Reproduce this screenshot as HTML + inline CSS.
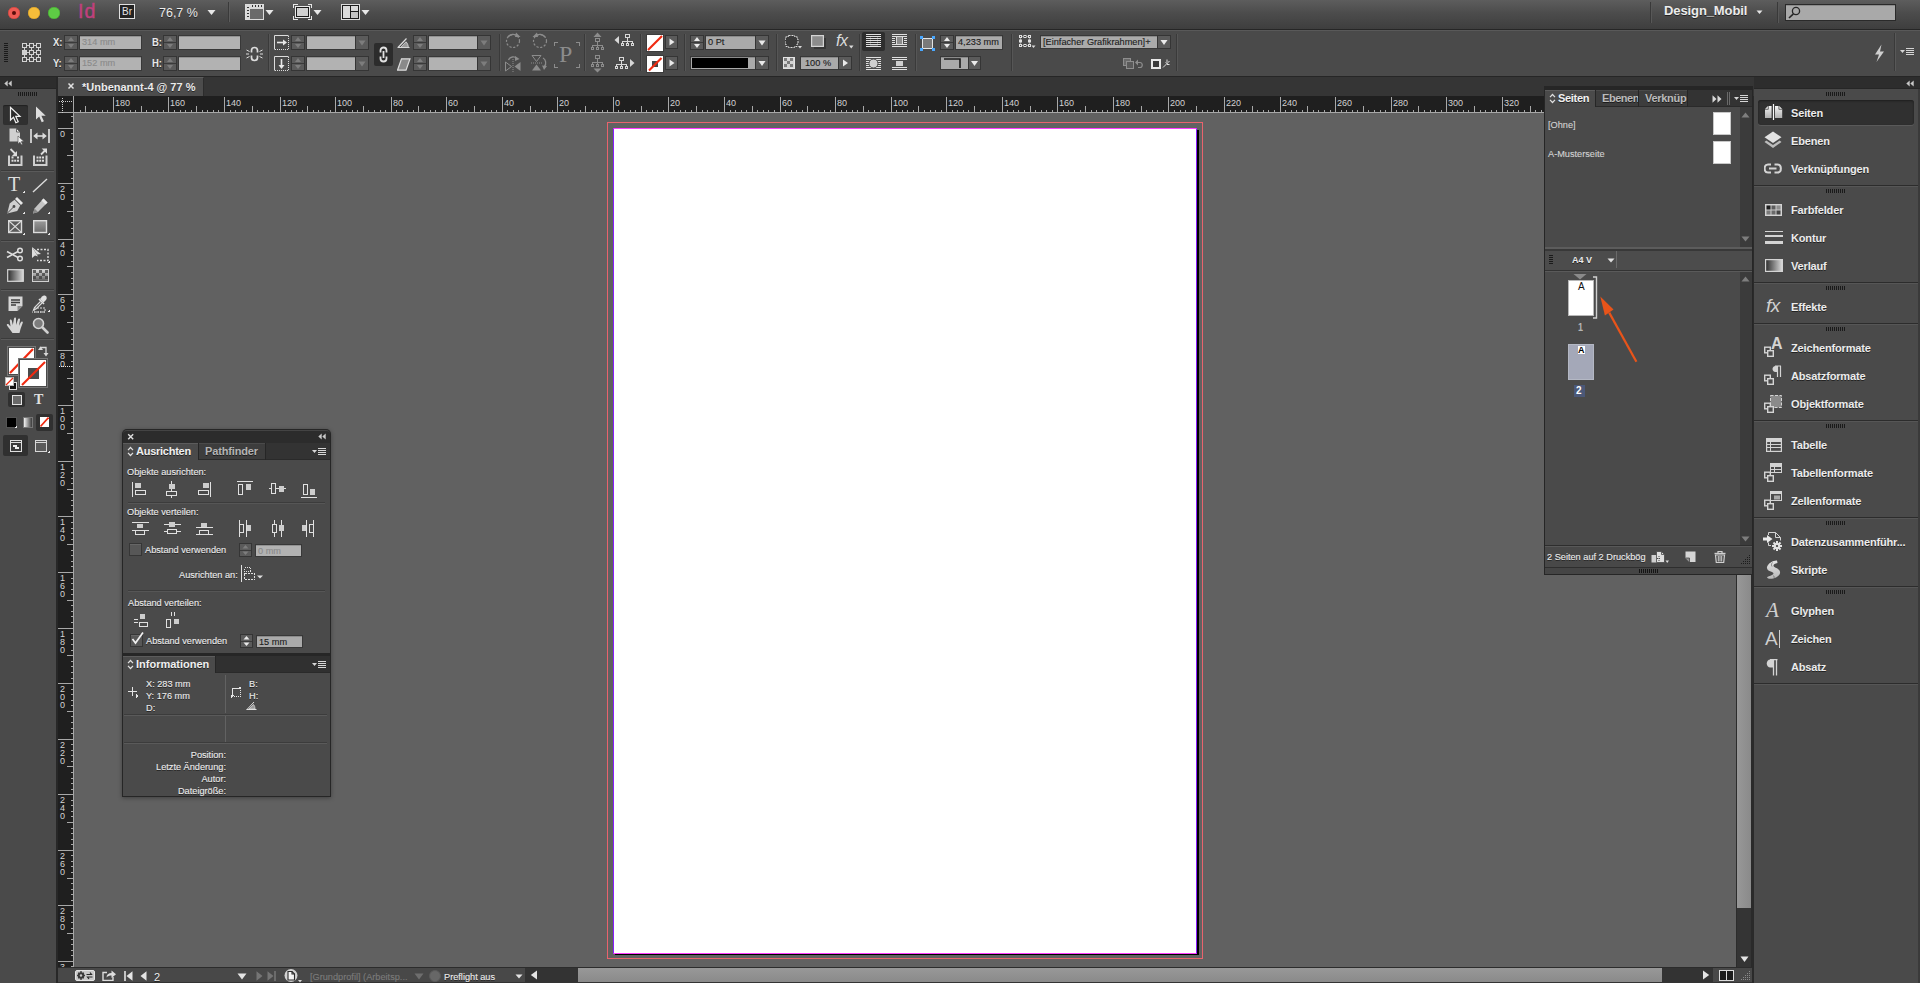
<!DOCTYPE html>
<html lang="de"><head><meta charset="utf-8"><title>InDesign</title><style>
html,body{margin:0;padding:0;}
body{width:1920px;height:983px;position:relative;overflow:hidden;background:#616161;font-family:"Liberation Sans",sans-serif;}
div,svg,span.t{position:absolute;display:block;box-sizing:border-box;}
span.t{white-space:nowrap;line-height:1;text-shadow:0 1px 0 rgba(0,0,0,.55);}
.sh0{text-shadow:none !important;}
</style></head><body>
<div style="left:607px;top:122px;width:596px;height:837px;border:1px solid #e8636d;"></div>
<div style="left:615px;top:130px;width:584px;height:825px;background:#000;"></div>
<div style="left:613px;top:128px;width:584px;height:826px;background:#fff;border-left:1px solid #8a1cff;border-right:1px solid #8a1cff;border-top:1px solid #ff3cff;border-bottom:1px solid #ff3cff;"></div>
<div style="left:58px;top:96px;width:1695px;height:17px;background:#1f1f1f;border-bottom:1px solid #a8a8a8;"></div>
<div style="left:58px;top:96px;width:16px;height:872px;background:#1f1f1f;border-right:1px solid #a8a8a8;"></div>
<div style="left:58px;top:112px;width:16px;height:1px;background:#a8a8a8;"></div>
<div style="left:73px;top:97px;width:1px;height:16px;background:#a8a8a8;"></div>
<svg style="left:0;top:0" width="80" height="115" viewBox="0 0 80 115" shape-rendering="crispEdges"><path d="M59 101h1M61 101h1M63 101h1M65 101h1M67 101h1M69 101h1M71 101h1M62 97v1M62 99v1M62 101v1M62 103v1M62 105v1M62 107v1M62 109v1M62 111v1" stroke="#cfcfcf" stroke-width="1" transform="translate(0,0.5)" fill="none"/></svg>
<svg style="left:0;top:0" width="1560" height="113" viewBox="0 0 1560 113" shape-rendering="crispEdges"><path d="M80 110v2M85 106v6M91 110v2M96 110v2M102 110v2M107 110v2M113 97v15M118 110v2M124 110v2M130 110v2M135 110v2M141 106v6M146 110v2M152 110v2M157 110v2M163 110v2M168 97v15M174 110v2M180 110v2M185 110v2M191 110v2M196 106v6M202 110v2M207 110v2M213 110v2M218 110v2M224 97v15M230 110v2M235 110v2M241 110v2M246 110v2M252 106v6M257 110v2M263 110v2M268 110v2M274 110v2M280 97v15M285 110v2M291 110v2M296 110v2M302 110v2M307 106v6M313 110v2M318 110v2M324 110v2M330 110v2M335 97v15M341 110v2M346 110v2M352 110v2M357 110v2M363 106v6M368 110v2M374 110v2M380 110v2M385 110v2M391 97v15M396 110v2M402 110v2M407 110v2M413 110v2M418 106v6M424 110v2M430 110v2M435 110v2M441 110v2M446 97v15M452 110v2M457 110v2M463 110v2M468 110v2M474 106v6M480 110v2M485 110v2M491 110v2M496 110v2M502 97v15M507 110v2M513 110v2M518 110v2M524 110v2M530 106v6M535 110v2M541 110v2M546 110v2M552 110v2M557 97v15M563 110v2M568 110v2M574 110v2M580 110v2M585 106v6M591 110v2M596 110v2M602 110v2M607 110v2M613 97v15M618 110v2M624 110v2M630 110v2M635 110v2M641 106v6M646 110v2M652 110v2M657 110v2M663 110v2M668 97v15M674 110v2M680 110v2M685 110v2M691 110v2M696 106v6M702 110v2M707 110v2M713 110v2M718 110v2M724 97v15M730 110v2M735 110v2M741 110v2M746 110v2M752 106v6M757 110v2M763 110v2M768 110v2M774 110v2M780 97v15M785 110v2M791 110v2M796 110v2M802 110v2M807 106v6M813 110v2M818 110v2M824 110v2M830 110v2M835 97v15M841 110v2M846 110v2M852 110v2M857 110v2M863 106v6M868 110v2M874 110v2M880 110v2M885 110v2M891 97v15M896 110v2M902 110v2M907 110v2M913 110v2M918 106v6M924 110v2M930 110v2M935 110v2M941 110v2M946 97v15M952 110v2M957 110v2M963 110v2M968 110v2M974 106v6M980 110v2M985 110v2M991 110v2M996 110v2M1002 97v15M1007 110v2M1013 110v2M1018 110v2M1024 110v2M1030 106v6M1035 110v2M1041 110v2M1046 110v2M1052 110v2M1057 97v15M1063 110v2M1068 110v2M1074 110v2M1080 110v2M1085 106v6M1091 110v2M1096 110v2M1102 110v2M1107 110v2M1113 97v15M1118 110v2M1124 110v2M1130 110v2M1135 110v2M1141 106v6M1146 110v2M1152 110v2M1157 110v2M1163 110v2M1168 97v15M1174 110v2M1180 110v2M1185 110v2M1191 110v2M1196 106v6M1202 110v2M1207 110v2M1213 110v2M1218 110v2M1224 97v15M1230 110v2M1235 110v2M1241 110v2M1246 110v2M1252 106v6M1257 110v2M1263 110v2M1268 110v2M1274 110v2M1280 97v15M1285 110v2M1291 110v2M1296 110v2M1302 110v2M1307 106v6M1313 110v2M1318 110v2M1324 110v2M1330 110v2M1335 97v15M1341 110v2M1346 110v2M1352 110v2M1357 110v2M1363 106v6M1368 110v2M1374 110v2M1380 110v2M1385 110v2M1391 97v15M1396 110v2M1402 110v2M1407 110v2M1413 110v2M1418 106v6M1424 110v2M1430 110v2M1435 110v2M1441 110v2M1446 97v15M1452 110v2M1457 110v2M1463 110v2M1468 110v2M1474 106v6M1480 110v2M1485 110v2M1491 110v2M1496 110v2M1502 97v15M1507 110v2M1513 110v2M1518 110v2M1524 110v2M1530 106v6M1535 110v2M1541 110v2" stroke="#a8a8a8" stroke-width="1" transform="translate(0.5,0)" fill="none"/></svg>
<span class="t" style="left:115px;top:98px;font-size:9px;color:#d2d2d2;font-size:9.5px;text-shadow:none;transform:scaleX(0.95);transform-origin:0 0;">180</span>
<span class="t" style="left:170px;top:98px;font-size:9px;color:#d2d2d2;font-size:9.5px;text-shadow:none;transform:scaleX(0.95);transform-origin:0 0;">160</span>
<span class="t" style="left:226px;top:98px;font-size:9px;color:#d2d2d2;font-size:9.5px;text-shadow:none;transform:scaleX(0.95);transform-origin:0 0;">140</span>
<span class="t" style="left:282px;top:98px;font-size:9px;color:#d2d2d2;font-size:9.5px;text-shadow:none;transform:scaleX(0.95);transform-origin:0 0;">120</span>
<span class="t" style="left:337px;top:98px;font-size:9px;color:#d2d2d2;font-size:9.5px;text-shadow:none;transform:scaleX(0.95);transform-origin:0 0;">100</span>
<span class="t" style="left:393px;top:98px;font-size:9px;color:#d2d2d2;font-size:9.5px;text-shadow:none;transform:scaleX(0.95);transform-origin:0 0;">80</span>
<span class="t" style="left:448px;top:98px;font-size:9px;color:#d2d2d2;font-size:9.5px;text-shadow:none;transform:scaleX(0.95);transform-origin:0 0;">60</span>
<span class="t" style="left:504px;top:98px;font-size:9px;color:#d2d2d2;font-size:9.5px;text-shadow:none;transform:scaleX(0.95);transform-origin:0 0;">40</span>
<span class="t" style="left:559px;top:98px;font-size:9px;color:#d2d2d2;font-size:9.5px;text-shadow:none;transform:scaleX(0.95);transform-origin:0 0;">20</span>
<span class="t" style="left:615px;top:98px;font-size:9px;color:#d2d2d2;font-size:9.5px;text-shadow:none;transform:scaleX(0.95);transform-origin:0 0;">0</span>
<span class="t" style="left:670px;top:98px;font-size:9px;color:#d2d2d2;font-size:9.5px;text-shadow:none;transform:scaleX(0.95);transform-origin:0 0;">20</span>
<span class="t" style="left:726px;top:98px;font-size:9px;color:#d2d2d2;font-size:9.5px;text-shadow:none;transform:scaleX(0.95);transform-origin:0 0;">40</span>
<span class="t" style="left:782px;top:98px;font-size:9px;color:#d2d2d2;font-size:9.5px;text-shadow:none;transform:scaleX(0.95);transform-origin:0 0;">60</span>
<span class="t" style="left:837px;top:98px;font-size:9px;color:#d2d2d2;font-size:9.5px;text-shadow:none;transform:scaleX(0.95);transform-origin:0 0;">80</span>
<span class="t" style="left:893px;top:98px;font-size:9px;color:#d2d2d2;font-size:9.5px;text-shadow:none;transform:scaleX(0.95);transform-origin:0 0;">100</span>
<span class="t" style="left:948px;top:98px;font-size:9px;color:#d2d2d2;font-size:9.5px;text-shadow:none;transform:scaleX(0.95);transform-origin:0 0;">120</span>
<span class="t" style="left:1004px;top:98px;font-size:9px;color:#d2d2d2;font-size:9.5px;text-shadow:none;transform:scaleX(0.95);transform-origin:0 0;">140</span>
<span class="t" style="left:1059px;top:98px;font-size:9px;color:#d2d2d2;font-size:9.5px;text-shadow:none;transform:scaleX(0.95);transform-origin:0 0;">160</span>
<span class="t" style="left:1115px;top:98px;font-size:9px;color:#d2d2d2;font-size:9.5px;text-shadow:none;transform:scaleX(0.95);transform-origin:0 0;">180</span>
<span class="t" style="left:1170px;top:98px;font-size:9px;color:#d2d2d2;font-size:9.5px;text-shadow:none;transform:scaleX(0.95);transform-origin:0 0;">200</span>
<span class="t" style="left:1226px;top:98px;font-size:9px;color:#d2d2d2;font-size:9.5px;text-shadow:none;transform:scaleX(0.95);transform-origin:0 0;">220</span>
<span class="t" style="left:1282px;top:98px;font-size:9px;color:#d2d2d2;font-size:9.5px;text-shadow:none;transform:scaleX(0.95);transform-origin:0 0;">240</span>
<span class="t" style="left:1337px;top:98px;font-size:9px;color:#d2d2d2;font-size:9.5px;text-shadow:none;transform:scaleX(0.95);transform-origin:0 0;">260</span>
<span class="t" style="left:1393px;top:98px;font-size:9px;color:#d2d2d2;font-size:9.5px;text-shadow:none;transform:scaleX(0.95);transform-origin:0 0;">280</span>
<span class="t" style="left:1448px;top:98px;font-size:9px;color:#d2d2d2;font-size:9.5px;text-shadow:none;transform:scaleX(0.95);transform-origin:0 0;">300</span>
<span class="t" style="left:1504px;top:98px;font-size:9px;color:#d2d2d2;font-size:9.5px;text-shadow:none;transform:scaleX(0.95);transform-origin:0 0;">320</span>
<svg style="left:0;top:0" width="75" height="967" viewBox="0 0 75 967" shape-rendering="crispEdges"><path d="M71 116h2M71 122h2M58 128h15M71 133h2M71 139h2M71 144h2M71 150h2M67 155h6M71 161h2M71 166h2M71 172h2M71 178h2M58 183h15M71 189h2M71 194h2M71 200h2M71 205h2M67 211h6M71 216h2M71 222h2M71 228h2M71 233h2M58 239h15M71 244h2M71 250h2M71 255h2M71 261h2M67 266h6M71 272h2M71 278h2M71 283h2M71 289h2M58 294h15M71 300h2M71 305h2M71 311h2M71 316h2M67 322h6M71 328h2M71 333h2M71 339h2M71 344h2M58 350h15M71 355h2M71 361h2M71 366h2M71 372h2M67 378h6M71 383h2M71 389h2M71 394h2M71 400h2M58 405h15M71 411h2M71 416h2M71 422h2M71 428h2M67 433h6M71 439h2M71 444h2M71 450h2M71 455h2M58 461h15M71 466h2M71 472h2M71 478h2M71 483h2M67 489h6M71 494h2M71 500h2M71 505h2M71 511h2M58 516h15M71 522h2M71 528h2M71 533h2M71 539h2M67 544h6M71 550h2M71 555h2M71 561h2M71 566h2M58 572h15M71 578h2M71 583h2M71 589h2M71 594h2M67 600h6M71 605h2M71 611h2M71 616h2M71 622h2M58 628h15M71 633h2M71 639h2M71 644h2M71 650h2M67 655h6M71 661h2M71 666h2M71 672h2M71 678h2M58 683h15M71 689h2M71 694h2M71 700h2M71 705h2M67 711h6M71 716h2M71 722h2M71 728h2M71 733h2M58 739h15M71 744h2M71 750h2M71 755h2M71 761h2M67 766h6M71 772h2M71 778h2M71 783h2M71 789h2M58 794h15M71 800h2M71 805h2M71 811h2M71 816h2M67 822h6M71 828h2M71 833h2M71 839h2M71 844h2M58 850h15M71 855h2M71 861h2M71 866h2M71 872h2M67 878h6M71 883h2M71 889h2M71 894h2M71 900h2M58 905h15M71 911h2M71 916h2M71 922h2M71 928h2M67 933h6M71 939h2M71 944h2M71 950h2M71 955h2M58 961h15M71 966h2M71 972h2M71 978h2M71 983h2M67 989h6" stroke="#a8a8a8" stroke-width="1" transform="translate(0,0.5)" fill="none"/></svg>
<div style="left:58px;top:113px;width:15px;height:855px;overflow:hidden;">
<span class="t" style="left:2px;top:17px;font-size:9px;color:#d4d4d4;text-shadow:none;">0</span>
<span class="t" style="left:2px;top:72px;font-size:9px;color:#d4d4d4;text-shadow:none;">2</span>
<span class="t" style="left:2px;top:80px;font-size:9px;color:#d4d4d4;text-shadow:none;">0</span>
<span class="t" style="left:2px;top:128px;font-size:9px;color:#d4d4d4;text-shadow:none;">4</span>
<span class="t" style="left:2px;top:136px;font-size:9px;color:#d4d4d4;text-shadow:none;">0</span>
<span class="t" style="left:2px;top:183px;font-size:9px;color:#d4d4d4;text-shadow:none;">6</span>
<span class="t" style="left:2px;top:191px;font-size:9px;color:#d4d4d4;text-shadow:none;">0</span>
<span class="t" style="left:2px;top:239px;font-size:9px;color:#d4d4d4;text-shadow:none;">8</span>
<span class="t" style="left:2px;top:247px;font-size:9px;color:#d4d4d4;text-shadow:none;">0</span>
<span class="t" style="left:2px;top:294px;font-size:9px;color:#d4d4d4;text-shadow:none;">1</span>
<span class="t" style="left:2px;top:302px;font-size:9px;color:#d4d4d4;text-shadow:none;">0</span>
<span class="t" style="left:2px;top:310px;font-size:9px;color:#d4d4d4;text-shadow:none;">0</span>
<span class="t" style="left:2px;top:350px;font-size:9px;color:#d4d4d4;text-shadow:none;">1</span>
<span class="t" style="left:2px;top:358px;font-size:9px;color:#d4d4d4;text-shadow:none;">2</span>
<span class="t" style="left:2px;top:366px;font-size:9px;color:#d4d4d4;text-shadow:none;">0</span>
<span class="t" style="left:2px;top:405px;font-size:9px;color:#d4d4d4;text-shadow:none;">1</span>
<span class="t" style="left:2px;top:413px;font-size:9px;color:#d4d4d4;text-shadow:none;">4</span>
<span class="t" style="left:2px;top:421px;font-size:9px;color:#d4d4d4;text-shadow:none;">0</span>
<span class="t" style="left:2px;top:461px;font-size:9px;color:#d4d4d4;text-shadow:none;">1</span>
<span class="t" style="left:2px;top:469px;font-size:9px;color:#d4d4d4;text-shadow:none;">6</span>
<span class="t" style="left:2px;top:477px;font-size:9px;color:#d4d4d4;text-shadow:none;">0</span>
<span class="t" style="left:2px;top:517px;font-size:9px;color:#d4d4d4;text-shadow:none;">1</span>
<span class="t" style="left:2px;top:525px;font-size:9px;color:#d4d4d4;text-shadow:none;">8</span>
<span class="t" style="left:2px;top:533px;font-size:9px;color:#d4d4d4;text-shadow:none;">0</span>
<span class="t" style="left:2px;top:572px;font-size:9px;color:#d4d4d4;text-shadow:none;">2</span>
<span class="t" style="left:2px;top:580px;font-size:9px;color:#d4d4d4;text-shadow:none;">0</span>
<span class="t" style="left:2px;top:588px;font-size:9px;color:#d4d4d4;text-shadow:none;">0</span>
<span class="t" style="left:2px;top:628px;font-size:9px;color:#d4d4d4;text-shadow:none;">2</span>
<span class="t" style="left:2px;top:636px;font-size:9px;color:#d4d4d4;text-shadow:none;">2</span>
<span class="t" style="left:2px;top:644px;font-size:9px;color:#d4d4d4;text-shadow:none;">0</span>
<span class="t" style="left:2px;top:683px;font-size:9px;color:#d4d4d4;text-shadow:none;">2</span>
<span class="t" style="left:2px;top:691px;font-size:9px;color:#d4d4d4;text-shadow:none;">4</span>
<span class="t" style="left:2px;top:699px;font-size:9px;color:#d4d4d4;text-shadow:none;">0</span>
<span class="t" style="left:2px;top:739px;font-size:9px;color:#d4d4d4;text-shadow:none;">2</span>
<span class="t" style="left:2px;top:747px;font-size:9px;color:#d4d4d4;text-shadow:none;">6</span>
<span class="t" style="left:2px;top:755px;font-size:9px;color:#d4d4d4;text-shadow:none;">0</span>
<span class="t" style="left:2px;top:794px;font-size:9px;color:#d4d4d4;text-shadow:none;">2</span>
<span class="t" style="left:2px;top:802px;font-size:9px;color:#d4d4d4;text-shadow:none;">8</span>
<span class="t" style="left:2px;top:810px;font-size:9px;color:#d4d4d4;text-shadow:none;">0</span>
<span class="t" style="left:2px;top:850px;font-size:9px;color:#d4d4d4;text-shadow:none;">3</span>
<span class="t" style="left:2px;top:858px;font-size:9px;color:#d4d4d4;text-shadow:none;">0</span>
<span class="t" style="left:2px;top:866px;font-size:9px;color:#d4d4d4;text-shadow:none;">0</span>
</div>
<svg style="left:0;top:0" width="75" height="400" viewBox="0 0 75 400" shape-rendering="crispEdges"><path d="M59 366h1M61 366h1M63 366h1M65 366h1M67 366h1M69 366h1M71 366h1" stroke="#e8e8e8" stroke-width="1" transform="translate(0,0.5)" fill="none"/></svg>
<div style="left:1736px;top:113px;width:17px;height:855px;background:#343434;"></div>
<div style="left:1736px;top:113px;width:1px;height:855px;background:#2c2c2c;"></div>
<div style="left:1737px;top:113px;width:14px;height:795px;background:linear-gradient(90deg,#989898,#8a8a8a);"></div>
<svg style="left:1740px;top:956px" width="10" height="7" viewBox="0 0 10 7" ><path d="M0.5 0.5h8L4.5 6z" fill="#e4e4e4"/></svg>
<div style="left:1751px;top:77px;width:3px;height:906px;background:#2a2a2a;"></div>
<div style="left:58px;top:967px;width:1694px;height:1px;background:#2c2c2c;"></div>
<div style="left:58px;top:968px;width:1694px;height:15px;background:#484848;"></div>
<div style="left:58px;top:982px;width:1694px;height:1px;background:#333;"></div>
<div style="left:525px;top:968px;width:1188px;height:14px;background:#333;"></div>
<div style="left:578px;top:968px;width:1084px;height:14px;background:linear-gradient(#989898,#8a8a8a);"></div>
<svg style="left:530px;top:970px" width="8" height="11" viewBox="0 0 8 11" ><path d="M7 0.5v9L0.8 5z" fill="#e4e4e4"/></svg>
<svg style="left:1702px;top:970px" width="8" height="11" viewBox="0 0 8 11" ><path d="M1 0.5v9L7.2 5z" fill="#e4e4e4"/></svg>
<div style="left:1713px;top:968px;width:39px;height:14px;background:#484848;"></div>
<svg style="left:1719px;top:970px" width="15" height="11" viewBox="0 0 15 11" shape-rendering="crispEdges"><rect x="0.5" y="0.5" width="14" height="10" fill="#1c1c1c" stroke="#dcdcdc"/><path d="M7.5 0v11" stroke="#dcdcdc"/></svg>
<svg style="left:1741px;top:971px" width="10" height="10" viewBox="0 0 10 10" shape-rendering="crispEdges"><path d="M0 8h1M2 6h1M2 8h1M4 4h1M4 6h1M4 8h1M6 2h1M6 4h1M6 6h1M6 8h1M8 0h1M8 2h1M8 4h1M8 6h1M8 8h1" stroke="#8a8a8a" stroke-width="1" transform="translate(0,0.5)"/></svg>
<div style="left:0px;top:0px;width:1920px;height:29px;background:linear-gradient(#5d5d5d,#4c4c4c 45%,#3e3e3e);"></div>
<div style="left:0px;top:29px;width:1920px;height:1px;background:#262626;"></div>
<div style="left:0px;top:30px;width:1920px;height:46px;background:#4a4a4a;border-top:1px solid #595959;"></div>
<div style="left:0px;top:76px;width:1920px;height:1px;background:#262626;"></div>
<div style="left:0px;top:77px;width:1920px;height:19px;background:#353535;"></div>
<div style="left:58px;top:77px;width:146px;height:19px;background:#4c4c4c;border-top:1px solid #5e5e5e;border-right:1px solid #2c2c2c;"></div>
<svg style="left:67px;top:82px" width="9" height="9" viewBox="0 0 9 9" ><path d="M1.5 1.5l5 5M6.5 1.5l-5 5" stroke="#e2e2e2" stroke-width="1.5" fill="none"/></svg>
<span class="t" style="left:82px;top:82px;font-size:11px;color:#ececec;font-weight:bold;letter-spacing:0px;">*Unbenannt-4 @ 77 %</span>
<div style="left:8px;top:7px;width:12px;height:12px;border-radius:6px;background:#ee5b54;box-shadow:inset 0 0 0 0.5px #c9413b;"></div>
<div style="left:28px;top:7px;width:12px;height:12px;border-radius:6px;background:#f6bd3a;box-shadow:inset 0 0 0 0.5px #d49c24;"></div>
<div style="left:48px;top:7px;width:12px;height:12px;border-radius:6px;background:#5ecb45;box-shadow:inset 0 0 0 0.5px #43a82f;"></div>
<div style="left:12px;top:11px;width:4px;height:4px;border-radius:2px;background:#5a0d0b;"></div>
<span class="t" style="left:78px;top:1px;font-size:20px;color:#c0407e;transform:scaleX(0.98);transform-origin:0 50%;text-shadow:none;letter-spacing:1px;-webkit-text-stroke:0.45px #c0407e;">Id</span>
<div style="left:119px;top:4px;width:16px;height:15px;background:#222;border:1px solid #e0e0e0;"></div>
<span class="t" style="left:122px;top:6px;font-size:10.5px;color:#e4e4e4;transform:scaleX(0.95);transform-origin:0 50%;text-shadow:none;">Br</span>
<span class="t" style="left:159px;top:6px;font-size:13px;color:#ececec;transform:scaleX(0.96);transform-origin:0 50%;">76,7 %</span>
<svg style="left:207px;top:9px" width="9" height="7" viewBox="0 0 9 7" ><path d="M0.5 1h8L4.5 6z" fill="#e8e8e8"/></svg>
<div style="left:228px;top:2px;width:1px;height:20px;background:#3a3a3a;border-right:0;"></div>
<div style="left:229px;top:2px;width:1px;height:20px;background:#5c5c5c;"></div>
<svg style="left:245px;top:4px" width="19" height="16" viewBox="0 0 19 16" shape-rendering="crispEdges"><rect x="0.5" y="0.5" width="18" height="15" fill="#d9d9d9" stroke="#dcdcdc"/><rect x="5" y="5" width="13" height="10" fill="#6a6a6a"/><path d="M2 3h2M2 6h2M2 9h2M2 12h2M7 1v2M10 1v2M13 1v2M16 1v2" stroke="#333"/></svg>
<svg style="left:265px;top:9px" width="9" height="7" viewBox="0 0 9 7" ><path d="M0.5 1h8L4.5 6z" fill="#e8e8e8"/></svg>
<svg style="left:293px;top:4px" width="19" height="16" viewBox="0 0 19 16" shape-rendering="crispEdges"><path d="M0.5 4V0.5h4M14.5 0.5h4V4M18.5 12v3.5h-4M4.500 15.500h-4V12" stroke="#e8e8e8" fill="none"/><rect x="3.5" y="3.5" width="12" height="9" fill="#d0d0d0" stroke="#1a1a1a"/><rect x="2.500" y="2.500" width="14" height="11" fill="none" stroke="#e8e8e8"/></svg>
<svg style="left:313px;top:9px" width="9" height="7" viewBox="0 0 9 7" ><path d="M0.5 1h8L4.5 6z" fill="#e8e8e8"/></svg>
<svg style="left:341px;top:4px" width="19" height="16" viewBox="0 0 19 16" shape-rendering="crispEdges"><rect x="0.5" y="0.5" width="18" height="15" fill="#1c1c1c" stroke="#dcdcdc"/><rect x="2" y="2" width="7" height="12" fill="#dadada"/><rect x="10" y="2" width="7" height="5" fill="#dadada"/><rect x="10" y="8" width="7" height="6" fill="#c4c4c4"/></svg>
<svg style="left:361px;top:9px" width="9" height="7" viewBox="0 0 9 7" ><path d="M0.5 1h8L4.5 6z" fill="#e8e8e8"/></svg>
<div style="left:1650px;top:2px;width:1px;height:21px;background:#393939;"></div>
<div style="left:1651px;top:2px;width:1px;height:21px;background:#585858;"></div>
<span class="t" style="left:1664px;top:4px;font-size:13px;color:#ececec;font-weight:bold;letter-spacing:-0.1px;">Design_Mobil</span>
<svg style="left:1756px;top:10px" width="8" height="5" viewBox="0 0 8 5" ><path d="M0.5 0.500h6L3.500 4z" fill="#e4e4e4"/></svg>
<div style="left:1777px;top:2px;width:1px;height:21px;background:#393939;"></div>
<div style="left:1778px;top:2px;width:1px;height:21px;background:#585858;"></div>
<div style="left:1785px;top:4px;width:111px;height:17px;background:#a9a9a9;border:1px solid #2a2a2a;box-shadow:inset 0 1px 0 #8c8c8c;"></div>
<svg style="left:1788px;top:6px" width="13" height="13" viewBox="0 0 13 13" ><circle cx="8" cy="5" r="3.600" fill="none" stroke="#262626" stroke-width="1.300"/><path d="M5.400 7.800L1 12" stroke="#262626" stroke-width="1.600"/></svg>
<svg style="left:1873px;top:44px" width="13" height="19" viewBox="0 0 13 19" ><path d="M8.500 0.500L2 10.500h4L3.500 18L11 7.500H7z" fill="#cfcfcf"/></svg>
<div style="left:1894px;top:33px;width:1px;height:38px;background:#3a3a3a;"></div>
<div style="left:1895px;top:33px;width:1px;height:38px;background:#585858;"></div>
<svg style="left:1900px;top:48px" width="15" height="8" viewBox="0 0 15 8" shape-rendering="crispEdges"><path d="M0 2h5L2.500 5z" fill="#d6d6d6" shape-rendering="auto"/><path d="M6 1h8M6 3h8M6 5h8M6 7h8" stroke="#d6d6d6" stroke-width="1" transform="translate(0,-0.5)"/></svg>
<div style="left:75px;top:970px;width:20px;height:11px;background:#c9c9c9;border-radius:2px;border:1px solid #e4e4e4;"></div>
<svg style="left:76px;top:970px" width="18" height="11" viewBox="0 0 18 11" ><circle cx="5" cy="5.500" r="3.200" fill="#3a3a3a"/><circle cx="5" cy="5.500" r="1.200" fill="#c9c9c9"/><path d="M5 1v9M1 5.500h8M2.200 2.700l5.600 5.600M7.800 2.700l-5.600 5.600" stroke="#3a3a3a" stroke-width="1.300"/><circle cx="5" cy="5.500" r="1.200" fill="#c9c9c9"/><path d="M10.500 4.500h5l-1.500-2M16.500 7h-5l1.500 2" stroke="#2a2a2a" stroke-width="1.200" fill="none"/></svg>
<svg style="left:102px;top:969px" width="15" height="12" viewBox="0 0 15 12" ><path d="M5 3.500H1v8h10V8" fill="none" stroke="#dcdcdc" stroke-width="1.400"/><path d="M4.500 8.500c0-3 2-4.500 5-4.500V1.500l4.500 3.800-4.500 3.800V6.500c-2 0-3.500 0.500-5 2z" fill="#dcdcdc"/></svg>
<svg style="left:124px;top:971px" width="9" height="10" viewBox="0 0 9 10" ><path d="M1 0v10" stroke="#e4e4e4" stroke-width="1.600"/><path d="M8.500 0.300v9.400L2.500 5z" fill="#e4e4e4"/></svg>
<svg style="left:140px;top:971px" width="7" height="10" viewBox="0 0 7 10" ><path d="M6.500 0.300v9.400L0.500 5z" fill="#e4e4e4"/></svg>
<span class="t" style="left:154px;top:972px;font-size:11px;color:#ececec;">2</span>
<svg style="left:237px;top:973px" width="10" height="7" viewBox="0 0 10 7" ><path d="M0.500 0.500h9L5 6.500z" fill="#e4e4e4"/></svg>
<svg style="left:256px;top:971px" width="7" height="10" viewBox="0 0 7 10" ><path d="M0.500 0.300v9.400L6.500 5z" fill="#757575"/></svg>
<svg style="left:267px;top:971px" width="9" height="10" viewBox="0 0 9 10" ><path d="M0.500 0.300v9.400L6.500 5z" fill="#757575"/><path d="M8 0v10" stroke="#757575" stroke-width="1.600"/></svg>
<svg style="left:284px;top:968px" width="18" height="15" viewBox="0 0 18 15" ><circle cx="7" cy="7.500" r="6.500" fill="#d2d2d2"/><path d="M4 3.500h4l2.500 2.500v6H4z" fill="#f4f4f4" stroke="#2b2b2b" stroke-width="1.100"/><path d="M8 3.500v2.500h2.500" fill="none" stroke="#2b2b2b" stroke-width="1.100"/><path d="M14 12h4l-2 2.500z" fill="#d6d6d6"/></svg>
<span class="t" style="left:310px;top:973px;font-size:9.2px;color:#7b7b7b;-webkit-text-stroke:0.12px;text-shadow:none;">[Grundprofil] (Arbeitsp...</span>
<svg style="left:414px;top:973px" width="10" height="7" viewBox="0 0 10 7" ><path d="M0.500 0.500h9L5 6.500z" fill="#6e6e6e"/></svg>
<div style="left:429px;top:970px;width:12px;height:12px;border-radius:6px;background:#676767;border:1px solid #5a5a5a;"></div>
<span class="t" style="left:444px;top:973px;font-size:9.2px;color:#ececec;-webkit-text-stroke:0.12px;">Preflight aus</span>
<svg style="left:515px;top:974px" width="8" height="5" viewBox="0 0 8 5" ><path d="M0.500 0.500h7L4 4.500z" fill="#e4e4e4"/></svg>
<div style="left:0px;top:77px;width:56px;height:906px;background:#4a4a4a;"></div>
<div style="left:0px;top:77px;width:56px;height:12px;background:#2d2d2d;border-bottom:1px solid #262626;"></div>
<div style="left:56px;top:77px;width:2px;height:906px;background:#282828;"></div>
<svg style="left:4px;top:80px" width="9" height="7" viewBox="0 0 9 7" ><path d="M3.700 0.500v6L0.300 3.500zM7.700 0.500v6L4.300 3.500z" fill="#c8c8c8"/></svg>
<svg style="left:18px;top:92px" width="20" height="4" viewBox="0 0 20 4" shape-rendering="crispEdges"><path d="M0 0v4M2 0v4M4 0v4M6 0v4M8 0v4M10 0v4M12 0v4M14 0v4M16 0v4M18 0v4" stroke="#1a1a1a" stroke-width="1" transform="translate(0.5,0)"/></svg>
<div style="left:3px;top:105px;width:25px;height:20px;background:#303030;border-radius:2px;box-shadow:inset 0 1px 1px #222;"></div>
<svg style="left:9px;top:106px" width="14" height="19" viewBox="0 0 14 19" ><path d="M1.500 1.500v12.500l3-2.800 2.400 5.600 2.300-1-2.400-5.400h4.200z" fill="#2b2b2b" stroke="#f0f0f0" stroke-width="1.200" stroke-linejoin="miter"/></svg>
<svg style="left:35px;top:106px" width="12" height="18" viewBox="0 0 12 18" ><path d="M1 0.500v13l3.200-3 2.500 5.800 2.200-1-2.500-5.600h4.300z" fill="#dedede"/></svg>
<svg style="left:9px;top:128px" width="15" height="17" viewBox="0 0 15 17" ><path d="M0.500 0.500h7l3.500 3.500v9.500h-10.500z" fill="#d0d0d0"/><path d="M7.500 0.500v3.500h3.500z" fill="#f4f4f4" stroke="#4a4a4a" stroke-width="0.800"/><path d="M9 8v8l2-1.800 1.200 2.600 1.300-0.600-1.200-2.600h2.700z" fill="#f0f0f0" stroke="#4a4a4a" stroke-width="0.600"/></svg>
<svg style="left:30px;top:129px" width="20" height="14" viewBox="0 0 20 14" ><path d="M1 0v14M19 0v14" stroke="#d4d4d4" stroke-width="1.800"/><path d="M5 7h10" stroke="#dcdcdc" stroke-width="1.600"/><path d="M3.200 7l4.300-3.500v7zM16.800 7l-4.300-3.500v7z" fill="#dcdcdc"/></svg>
<svg style="left:8px;top:148px" width="15" height="18" viewBox="0 0 15 18" ><g transform="translate(0,7.500)"><path d="M1 0v9.500h12.500v-9.500" fill="none" stroke="#d0d0d0" stroke-width="2"/><rect x="3.5" y="1" width="2" height="2" fill="#dcdcdc"/><rect x="9" y="1" width="2" height="2" fill="#dcdcdc"/><rect x="3.5" y="4.2" width="2" height="2" fill="#dcdcdc"/><rect x="6.2" y="4.2" width="2" height="2" fill="#dcdcdc"/><rect x="9" y="4.2" width="2" height="2" fill="#dcdcdc"/></g><path d="M2.500 1l4.500 4.500" stroke="#dcdcdc" stroke-width="1.800"/><path d="M9 3v5.300h-5.300z" fill="#dcdcdc"/></svg>
<svg style="left:33px;top:148px" width="16" height="18" viewBox="0 0 16 18" ><g transform="translate(0,7.500)"><path d="M1 0v9.500h12.500v-9.500" fill="none" stroke="#d0d0d0" stroke-width="2"/><rect x="3.5" y="1" width="2" height="2" fill="#dcdcdc"/><rect x="6.2" y="1" width="2" height="2" fill="#dcdcdc"/><rect x="9" y="1" width="2" height="2" fill="#dcdcdc"/><rect x="3.5" y="4.2" width="2" height="2" fill="#dcdcdc"/><rect x="6.2" y="4.2" width="2" height="2" fill="#dcdcdc"/><rect x="9" y="4.2" width="2" height="2" fill="#dcdcdc"/></g><path d="M8 6.500l4.500-4.500" stroke="#dcdcdc" stroke-width="1.800"/><path d="M8.700 0.500h5.300v5.300z" fill="#dcdcdc"/></svg>
<div style="left:1px;top:170px;width:53px;height:1px;background:#3b3b3b;"></div>
<div style="left:1px;top:171px;width:53px;height:1px;background:#5a5a5a;"></div>
<span class="t" style="left:8px;top:174px;font-size:20px;color:#dedede;font-family:'Liberation Serif',serif;text-shadow:none;">T</span>
<svg style="left:22px;top:190px" width="3" height="3" viewBox="0 0 3 3" shape-rendering="crispEdges"><path d="M3 0v3H0z" fill="#e6e6e6"/></svg>
<svg style="left:32px;top:178px" width="16" height="15" viewBox="0 0 16 15" ><path d="M1 14L15 1" stroke="#dcdcdc" stroke-width="1.400"/></svg>
<svg style="left:6px;top:196px" width="18" height="18" viewBox="0 0 18 18" ><path d="M11 1l6 6-2 2-6-6z" fill="#e6e6e6"/><path d="M8.500 3.800l5.700 5.700-3 5.500-10 2.500 2.500-10z" fill="#cfcfcf"/><path d="M1.500 17l6-6" stroke="#4a4a4a" stroke-width="1"/><circle cx="8" cy="10.500" r="1.400" fill="#4a4a4a"/></svg>
<svg style="left:22px;top:211px" width="3" height="3" viewBox="0 0 3 3" shape-rendering="crispEdges"><path d="M3 0v3H0z" fill="#e6e6e6"/></svg>
<svg style="left:32px;top:197px" width="17" height="17" viewBox="0 0 17 17" ><path d="M11.500 1.500l4 4-9.500 9.500-5 1.500 1.500-5z" fill="#c4c4c4"/><path d="M11.500 1.500l4 4-2 2-4-4z" fill="#e8e8e8"/><path d="M1 16.500l1.500-5 3.500 3.500z" fill="#8a8a8a"/></svg>
<svg style="left:47px;top:211px" width="3" height="3" viewBox="0 0 3 3" shape-rendering="crispEdges"><path d="M3 0v3H0z" fill="#e6e6e6"/></svg>
<svg style="left:8px;top:220px" width="15" height="14" viewBox="0 0 15 14" ><rect x="0.700" y="0.700" width="12.800" height="11.800" fill="#5a5a5a" stroke="#dcdcdc" stroke-width="1.400"/><path d="M1 1l12.200 11.200M13.200 1L1 12.200" stroke="#dcdcdc" stroke-width="1.100"/></svg>
<svg style="left:22px;top:232px" width="3" height="3" viewBox="0 0 3 3" shape-rendering="crispEdges"><path d="M3 0v3H0z" fill="#e6e6e6"/></svg>
<svg style="left:33px;top:220px" width="15" height="14" viewBox="0 0 15 14" ><defs><linearGradient id="rg1" x1="0" y1="0" x2="0" y2="1"><stop offset="0" stop-color="#9a9a9a"/><stop offset="1" stop-color="#6a6a6a"/></linearGradient></defs><rect x="0.700" y="0.700" width="12.800" height="11.800" fill="url(#rg1)" stroke="#dcdcdc" stroke-width="1.400"/></svg>
<svg style="left:47px;top:232px" width="3" height="3" viewBox="0 0 3 3" shape-rendering="crispEdges"><path d="M3 0v3H0z" fill="#e6e6e6"/></svg>
<div style="left:1px;top:240px;width:53px;height:1px;background:#3b3b3b;"></div>
<div style="left:1px;top:241px;width:53px;height:1px;background:#5a5a5a;"></div>
<svg style="left:6px;top:247px" width="18" height="16" viewBox="0 0 18 16" ><circle cx="14" cy="3.500" r="2.300" fill="none" stroke="#dcdcdc" stroke-width="1.500"/><circle cx="14" cy="11.500" r="2.300" fill="none" stroke="#dcdcdc" stroke-width="1.500"/><path d="M12 4.500L1 10.500M12 10.500L1 4.500" stroke="#dcdcdc" stroke-width="1.600"/></svg>
<svg style="left:31px;top:246px" width="19" height="18" viewBox="0 0 19 18" ><path d="M6 3.500h11v11h-11" fill="none" stroke="#dcdcdc" stroke-width="1.400" stroke-dasharray="2 1.500"/><path d="M1 1v11l3-2.500 3 1z" fill="#dcdcdc"/><path d="M1 1l9 7-4 0.500z" fill="#dcdcdc"/></svg>
<svg style="left:47px;top:260px" width="3" height="3" viewBox="0 0 3 3" shape-rendering="crispEdges"><path d="M3 0v3H0z" fill="#e6e6e6"/></svg>
<svg style="left:7px;top:269px" width="17" height="13" viewBox="0 0 17 13" ><defs><linearGradient id="rg2" x1="0" y1="0" x2="1" y2="0"><stop offset="0" stop-color="#2c2c2c"/><stop offset="1" stop-color="#d8d8d8"/></linearGradient></defs><rect x="0.700" y="0.700" width="15.600" height="11.600" fill="url(#rg2)" stroke="#d8d8d8" stroke-width="1.200"/></svg>
<svg style="left:32px;top:269px" width="17" height="13" viewBox="0 0 17 13" shape-rendering="crispEdges"><defs><linearGradient id="rg3" x1="0" y1="0" x2="0" y2="1"><stop offset="0" stop-color="#e0e0e0"/><stop offset="1" stop-color="#555"/></linearGradient></defs><rect x="0.500" y="0.500" width="16" height="12" fill="url(#rg3)" stroke="#d0d0d0"/><path d="M1 1h3v3h-3zM7 1h3v3h-3zM13 1h3v3h-3zM4 4h3v3h-3zM10 4h3v3h-3zM1 7h3v3h-3zM7 7h3v3h-3zM13 7h3v3h-3z" fill="#3c3c3c" opacity="0.750"/></svg>
<div style="left:1px;top:289px;width:53px;height:1px;background:#3b3b3b;"></div>
<div style="left:1px;top:290px;width:53px;height:1px;background:#5a5a5a;"></div>
<svg style="left:8px;top:296px" width="15" height="16" viewBox="0 0 15 16" ><path d="M0.500 0.500h14v9.500l-5 5h-9z" fill="#d6d6d6"/><path d="M14.500 10l-5 5v-5z" fill="#8c8c8c"/><path d="M3 4h9M3 6.500h9M3 9h5" stroke="#3c3c3c" stroke-width="1.300"/></svg>
<svg style="left:31px;top:295px" width="19" height="18" viewBox="0 0 19 18" ><path d="M11 1.500c1.500-1.500 4-1 4.500 0.500s0 2.500-1 3.500l-2 2-3.500-3.500z" fill="#e0e0e0"/><path d="M8 4l5 5" stroke="#e0e0e0" stroke-width="1.600"/><path d="M9.500 6.500l-6 6-1 2.500 2.500-1 6-6" fill="none" stroke="#dcdcdc" stroke-width="1.100"/><path d="M1 17h13" stroke="#dcdcdc" stroke-width="1" stroke-dasharray="1 1"/><path d="M3 13h11v4h-11z" fill="none" stroke="#dcdcdc" stroke-width="1" stroke-dasharray="2 1"/></svg>
<svg style="left:47px;top:309px" width="3" height="3" viewBox="0 0 3 3" shape-rendering="crispEdges"><path d="M3 0v3H0z" fill="#e6e6e6"/></svg>
<svg style="left:5px;top:316px" width="19" height="18" viewBox="0 0 19 18" ><path d="M7.500 17L2 9.500C1.200 8.200 2.800 7.400 3.800 8.400L5.500 10.500L4.800 4.800C4.600 3.400 6.400 3.100 6.800 4.500L7.800 9L9 2.500C9.200 1.100 11 1.100 11 2.500L11 9L13 3.300C13.400 2 15.200 2.400 15 3.800L14 9.800L16 6C16.600 4.800 18.200 5.500 17.800 6.800L15.500 13L14.500 17Z" fill="#d6d6d6"/></svg>
<svg style="left:32px;top:317px" width="17" height="17" viewBox="0 0 17 17" ><circle cx="6.500" cy="6.500" r="5" fill="#7c7c7c" stroke="#d4d4d4" stroke-width="1.600"/><path d="M10.500 10.500l5 5" stroke="#d0d0d0" stroke-width="2.600" stroke-linecap="round"/></svg>
<div style="left:1px;top:338px;width:53px;height:1px;background:#3b3b3b;"></div>
<div style="left:1px;top:339px;width:53px;height:1px;background:#5a5a5a;"></div>
<div style="left:7px;top:346px;width:29px;height:30px;border:1px solid #777;"></div>
<div style="left:9px;top:348px;width:25px;height:26px;background:#fff;"></div>
<svg style="left:9px;top:348px" width="25" height="26" viewBox="0 0 25 26" ><path d="M1 25L24 1" stroke="#f02a10" stroke-width="2.200"/></svg>
<div style="left:18px;top:358px;width:30px;height:30px;background:#4a4a4a;border:1px solid #777;"></div>
<div style="left:20px;top:360px;width:26px;height:26px;background:#fff;"></div>
<div style="left:28px;top:368px;width:11px;height:11px;background:#4a4a4a;"></div>
<svg style="left:20px;top:360px" width="26" height="26" viewBox="0 0 26 26" ><path d="M2 25L25 2" stroke="#f02a10" stroke-width="2.200"/></svg>
<svg style="left:38px;top:345px" width="11" height="12" viewBox="0 0 11 12" ><path d="M2.500 5V2.500h5.500v6" fill="none" stroke="#d8d8d8" stroke-width="1.300"/><path d="M0 5h5L2.500 1.500zM5.500 8h5L8 11.500z" fill="#d8d8d8"/></svg>
<svg style="left:5px;top:377px" width="13" height="14" viewBox="0 0 13 14" ><rect x="4.500" y="5.500" width="7" height="7" fill="#111" stroke="#ddd"/><rect x="0.500" y="0.500" width="8" height="8" fill="#fff" stroke="#bbb"/><path d="M1 8L8 1" stroke="#f02a10" stroke-width="1.200"/></svg>
<div style="left:8px;top:392px;width:17px;height:15px;background:#303030;border-radius:2px;"></div>
<div style="left:12px;top:395px;width:10px;height:10px;background:#6a6a6a;border:1px solid #e4e4e4;"></div>
<span class="t" style="left:34px;top:393px;font-size:14px;color:#e0e0e0;font-weight:bold;font-family:'Liberation Serif',serif;text-shadow:none;">T</span>
<div style="left:6px;top:417px;width:11px;height:11px;background:#000;border:1px solid #555;"></div>
<svg style="left:14px;top:425px" width="3" height="3" viewBox="0 0 3 3" shape-rendering="crispEdges"><path d="M3 0v3H0z" fill="#e6e6e6"/></svg>
<div style="left:23px;top:417px;width:10px;height:11px;background:linear-gradient(90deg,#f4f4f4,#3a3a3a);border:1px solid #777;"></div>
<div style="left:36px;top:414px;width:17px;height:17px;background:#303030;border-radius:2px;"></div>
<div style="left:40px;top:417px;width:9px;height:10px;background:#fff;"></div>
<svg style="left:40px;top:417px" width="9" height="10" viewBox="0 0 9 10" ><path d="M0.500 9.500L8.500 0.500" stroke="#f02a10" stroke-width="1.600"/></svg>
<div style="left:3px;top:435px;width:25px;height:21px;background:#303030;border-radius:2px;"></div>
<svg style="left:10px;top:440px" width="12" height="12" viewBox="0 0 12 12" shape-rendering="crispEdges"><rect x="0.500" y="0.500" width="11" height="11" fill="#3c3c3c" stroke="#e0e0e0"/><path d="M0 2.500h12" stroke="#e0e0e0"/><rect x="3" y="5" width="4" height="2" fill="#f0f0f0"/><rect x="5" y="7" width="4" height="2" fill="#f0f0f0"/></svg>
<svg style="left:35px;top:440px" width="12" height="12" viewBox="0 0 12 12" shape-rendering="crispEdges"><rect x="0.500" y="0.500" width="11" height="11" fill="#5a5a5a" stroke="#d8d8d8"/><path d="M0 2.500h12" stroke="#d8d8d8"/></svg>
<svg style="left:47px;top:450px" width="3" height="3" viewBox="0 0 3 3" shape-rendering="crispEdges"><path d="M3 0v3H0z" fill="#e6e6e6"/></svg>
<svg style="left:4px;top:43px" width="4" height="20" viewBox="0 0 4 20" shape-rendering="crispEdges"><path d="M0 0h4M0 2h4M0 4h4M0 6h4M0 8h4M0 10h4M0 12h4M0 14h4M0 16h4M0 18h4" stroke="#1a1a1a" stroke-width="1" transform="translate(0,0.5)"/></svg>
<svg style="left:22px;top:43px" width="20" height="20" viewBox="0 0 20 20" shape-rendering="crispEdges"><path d="M2.500 2.500h14v14h-14zM2.500 9.500h14M9.500 2.500v14" fill="none" stroke="#cfcfcf" stroke-width="1"/><rect x="0.5" y="0.5" width="4" height="4" fill="#4a4a4a" stroke="#d4d4d4"/><rect x="0.5" y="7.5" width="4" height="4" fill="#d0d0d0" stroke="#d4d4d4"/><rect x="0.5" y="14.5" width="4" height="4" fill="#4a4a4a" stroke="#d4d4d4"/><rect x="7.5" y="0.5" width="4" height="4" fill="#4a4a4a" stroke="#d4d4d4"/><rect x="7.5" y="7.5" width="4" height="4" fill="#4a4a4a" stroke="#d4d4d4"/><rect x="7.5" y="14.5" width="4" height="4" fill="#4a4a4a" stroke="#d4d4d4"/><rect x="14.5" y="0.5" width="4" height="4" fill="#4a4a4a" stroke="#d4d4d4"/><rect x="14.5" y="7.5" width="4" height="4" fill="#4a4a4a" stroke="#d4d4d4"/><rect x="14.5" y="14.5" width="4" height="4" fill="#4a4a4a" stroke="#d4d4d4"/></svg>
<span class="t" style="left:53px;top:37px;font-size:11px;color:#e8e8e8;transform:scaleX(0.86);transform-origin:0 50%;font-weight:bold;">X:</span>
<div style="left:64px;top:35px;width:14px;height:15px;background:#5b5b5b;border:1px solid #353535;"></div>
<div style="left:65px;top:42px;width:12px;height:1px;background:#3a3a3a;"></div>
<svg style="left:64px;top:35px" width="14" height="15" viewBox="0 0 14 15" ><path d="M4.0 6.0h6L7.0 2z" fill="#7d7d7d"/><path d="M4.0 9.0h6L7.0 13z" fill="#7d7d7d"/></svg>
<div style="left:79px;top:35px;width:63px;height:15px;background:#b2b2b2;border:1px solid #383838;box-shadow:inset 0 1px 0 rgba(0,0,0,.18);"></div>
<span class="t" style="left:82px;top:38px;font-size:9.2px;color:#8a8a8a;-webkit-text-stroke:0.12px;text-shadow:none;">314 mm</span>
<span class="t" style="left:53px;top:58px;font-size:11px;color:#e8e8e8;transform:scaleX(0.86);transform-origin:0 50%;font-weight:bold;">Y:</span>
<div style="left:64px;top:56px;width:14px;height:15px;background:#5b5b5b;border:1px solid #353535;"></div>
<div style="left:65px;top:63px;width:12px;height:1px;background:#3a3a3a;"></div>
<svg style="left:64px;top:56px" width="14" height="15" viewBox="0 0 14 15" ><path d="M4.0 6.0h6L7.0 2z" fill="#7d7d7d"/><path d="M4.0 9.0h6L7.0 13z" fill="#7d7d7d"/></svg>
<div style="left:79px;top:56px;width:63px;height:15px;background:#b2b2b2;border:1px solid #383838;box-shadow:inset 0 1px 0 rgba(0,0,0,.18);"></div>
<span class="t" style="left:82px;top:59px;font-size:9.2px;color:#8a8a8a;-webkit-text-stroke:0.12px;text-shadow:none;">152 mm</span>
<span class="t" style="left:152px;top:37px;font-size:11px;color:#e8e8e8;transform:scaleX(0.86);transform-origin:0 50%;font-weight:bold;">B:</span>
<div style="left:163px;top:35px;width:14px;height:15px;background:#5b5b5b;border:1px solid #353535;"></div>
<div style="left:164px;top:42px;width:12px;height:1px;background:#3a3a3a;"></div>
<svg style="left:163px;top:35px" width="14" height="15" viewBox="0 0 14 15" ><path d="M4.0 6.0h6L7.0 2z" fill="#7d7d7d"/><path d="M4.0 9.0h6L7.0 13z" fill="#7d7d7d"/></svg>
<div style="left:178px;top:35px;width:63px;height:15px;background:#b2b2b2;border:1px solid #383838;box-shadow:inset 0 1px 0 rgba(0,0,0,.18);"></div>
<span class="t" style="left:152px;top:58px;font-size:11px;color:#e8e8e8;transform:scaleX(0.86);transform-origin:0 50%;font-weight:bold;">H:</span>
<div style="left:163px;top:56px;width:14px;height:15px;background:#5b5b5b;border:1px solid #353535;"></div>
<div style="left:164px;top:63px;width:12px;height:1px;background:#3a3a3a;"></div>
<svg style="left:163px;top:56px" width="14" height="15" viewBox="0 0 14 15" ><path d="M4.0 6.0h6L7.0 2z" fill="#7d7d7d"/><path d="M4.0 9.0h6L7.0 13z" fill="#7d7d7d"/></svg>
<div style="left:178px;top:56px;width:63px;height:15px;background:#b2b2b2;border:1px solid #383838;box-shadow:inset 0 1px 0 rgba(0,0,0,.18);"></div>
<svg style="left:246px;top:46px" width="17" height="16" viewBox="0 0 17 16" ><path d="M5.500 6.500v-2c0-4 6-4 6 0v2M5.500 9.500v2c0 4 6 4 6 0v-2" fill="none" stroke="#dcdcdc" stroke-width="1.700"/><path d="M0.500 4l3 1.500M0.500 12l3-1.500M16.500 4l-3 1.500M16.500 12l-3-1.500M0 8h3M14 8h3" stroke="#dcdcdc" stroke-width="1"/></svg>
<div style="left:268px;top:34px;width:1px;height:37px;background:#3a3a3a;"></div>
<div style="left:269px;top:34px;width:1px;height:37px;background:#565656;"></div>
<svg style="left:274px;top:35px" width="15" height="15" viewBox="0 0 15 15" ><path d="M0.500 14.500v-14h14" fill="none" stroke="#dcdcdc"/><path d="M14.500 1v13.500h-14" fill="none" stroke="#dcdcdc" stroke-dasharray="1 1"/><path d="M3 7.500h7" stroke="#e8e8e8" stroke-width="1.600"/><path d="M9 4.500l4 3-4 3z" fill="#e8e8e8"/></svg>
<svg style="left:274px;top:56px" width="15" height="15" viewBox="0 0 15 15" ><path d="M0.500 14.500v-14h14" fill="none" stroke="#dcdcdc"/><path d="M14.500 1v13.500h-14" fill="none" stroke="#dcdcdc" stroke-dasharray="1 1"/><path d="M7.500 3v7" stroke="#e8e8e8" stroke-width="1.600"/><path d="M4.500 9l3 4 3-4z" fill="#e8e8e8"/></svg>
<div style="left:291px;top:35px;width:14px;height:15px;background:#5b5b5b;border:1px solid #353535;"></div>
<div style="left:292px;top:42px;width:12px;height:1px;background:#3a3a3a;"></div>
<svg style="left:291px;top:35px" width="14" height="15" viewBox="0 0 14 15" ><path d="M4.0 6.0h6L7.0 2z" fill="#7d7d7d"/><path d="M4.0 9.0h6L7.0 13z" fill="#7d7d7d"/></svg>
<div style="left:306px;top:35px;width:50px;height:15px;background:#b2b2b2;border:1px solid #383838;box-shadow:inset 0 1px 0 rgba(0,0,0,.18);"></div>
<div style="left:355px;top:35px;width:14px;height:15px;background:#5b5b5b;border:1px solid #353535;"></div>
<svg style="left:355px;top:35px" width="14" height="15" viewBox="0 0 14 15" ><path d="M3.5 5.5h7L7.0 10.5z" fill="#7d7d7d"/></svg>
<div style="left:291px;top:56px;width:14px;height:15px;background:#5b5b5b;border:1px solid #353535;"></div>
<div style="left:292px;top:63px;width:12px;height:1px;background:#3a3a3a;"></div>
<svg style="left:291px;top:56px" width="14" height="15" viewBox="0 0 14 15" ><path d="M4.0 6.0h6L7.0 2z" fill="#7d7d7d"/><path d="M4.0 9.0h6L7.0 13z" fill="#7d7d7d"/></svg>
<div style="left:306px;top:56px;width:50px;height:15px;background:#b2b2b2;border:1px solid #383838;box-shadow:inset 0 1px 0 rgba(0,0,0,.18);"></div>
<div style="left:355px;top:56px;width:14px;height:15px;background:#5b5b5b;border:1px solid #353535;"></div>
<svg style="left:355px;top:56px" width="14" height="15" viewBox="0 0 14 15" ><path d="M3.5 5.5h7L7.0 10.5z" fill="#7d7d7d"/></svg>
<div style="left:374px;top:43px;width:19px;height:23px;background:#2c2c2c;border-radius:2px;"></div>
<svg style="left:378px;top:46px" width="11" height="17" viewBox="0 0 11 17" ><path d="M2.500 6.500v-2c0-4 6-4 6 0v2M2.500 10.500v2c0 4 6 4 6 0v-2" fill="none" stroke="#e2e2e2" stroke-width="1.800"/><path d="M5.500 5v7" stroke="#e2e2e2" stroke-width="1.800"/></svg>
<svg style="left:397px;top:37px" width="13" height="12" viewBox="0 0 13 12" ><path d="M0.500 10.500h12M1 10.500L9.500 1.500" stroke="#dcdcdc" stroke-width="1.200" fill="none"/><path d="M3.500 10.500L9 4.800c1.500 1.500 2.300 3.500 2.300 5.700z" fill="#9a9a9a" stroke="#dcdcdc" stroke-width="0.800"/></svg>
<svg style="left:397px;top:58px" width="14" height="13" viewBox="0 0 14 13" ><path d="M4.500 0.800h8.500l-4 11.400h-8.500z" fill="#8a8a8a" stroke="#dcdcdc" stroke-width="1.200"/></svg>
<div style="left:413px;top:35px;width:14px;height:15px;background:#5b5b5b;border:1px solid #353535;"></div>
<div style="left:414px;top:42px;width:12px;height:1px;background:#3a3a3a;"></div>
<svg style="left:413px;top:35px" width="14" height="15" viewBox="0 0 14 15" ><path d="M4.0 6.0h6L7.0 2z" fill="#7d7d7d"/><path d="M4.0 9.0h6L7.0 13z" fill="#7d7d7d"/></svg>
<div style="left:428px;top:35px;width:50px;height:15px;background:#b2b2b2;border:1px solid #383838;box-shadow:inset 0 1px 0 rgba(0,0,0,.18);"></div>
<div style="left:477px;top:35px;width:14px;height:15px;background:#5b5b5b;border:1px solid #353535;"></div>
<svg style="left:477px;top:35px" width="14" height="15" viewBox="0 0 14 15" ><path d="M3.5 5.5h7L7.0 10.5z" fill="#7d7d7d"/></svg>
<div style="left:413px;top:56px;width:14px;height:15px;background:#5b5b5b;border:1px solid #353535;"></div>
<div style="left:414px;top:63px;width:12px;height:1px;background:#3a3a3a;"></div>
<svg style="left:413px;top:56px" width="14" height="15" viewBox="0 0 14 15" ><path d="M4.0 6.0h6L7.0 2z" fill="#7d7d7d"/><path d="M4.0 9.0h6L7.0 13z" fill="#7d7d7d"/></svg>
<div style="left:428px;top:56px;width:50px;height:15px;background:#b2b2b2;border:1px solid #383838;box-shadow:inset 0 1px 0 rgba(0,0,0,.18);"></div>
<div style="left:477px;top:56px;width:14px;height:15px;background:#5b5b5b;border:1px solid #353535;"></div>
<svg style="left:477px;top:56px" width="14" height="15" viewBox="0 0 14 15" ><path d="M3.5 5.5h7L7.0 10.5z" fill="#7d7d7d"/></svg>
<div style="left:499px;top:34px;width:1px;height:37px;background:#3a3a3a;"></div>
<div style="left:500px;top:34px;width:1px;height:37px;background:#565656;"></div>
<svg style="left:505px;top:32px" width="17" height="17" viewBox="0 0 17 17" ><circle cx="8" cy="9" r="6.500" fill="none" stroke="#8c8c8c" stroke-width="1.200" stroke-dasharray="2.200 1.600"/><path d="M3 5c2-3 6.500-3.500 9.500-1" fill="none" stroke="#8c8c8c" stroke-width="1.400"/><path d="M11 0.500l4.500 4.500h-5.500z" fill="#8c8c8c"/></svg>
<svg style="left:531px;top:32px" width="17" height="17" viewBox="0 0 17 17" ><circle cx="9" cy="9" r="6.500" fill="none" stroke="#8c8c8c" stroke-width="1.200" stroke-dasharray="2.200 1.600"/><path d="M14 5c-2-3-6.500-3.500-9.500-1" fill="none" stroke="#8c8c8c" stroke-width="1.400"/><path d="M6 0.500l-4.500 4.500h5.500z" fill="#8c8c8c"/></svg>
<svg style="left:505px;top:55px" width="17" height="17" viewBox="0 0 17 17" ><path d="M0.500 7v9l6-4.500z" fill="none" stroke="#8c8c8c"/><path d="M15.500 7v9l-6-4.500z" fill="#8c8c8c"/><path d="M8 4v13" stroke="#8c8c8c" stroke-dasharray="1 1"/><path d="M3.500 5c1.500-3.500 6-4 8.500-1.500" fill="none" stroke="#8c8c8c" stroke-width="1.300"/><path d="M10 1l4.500 3-4.500 2z" fill="#8c8c8c"/></svg>
<svg style="left:531px;top:55px" width="18" height="17" viewBox="0 0 18 17" ><path d="M1 0.500h9l-4.500 6z" fill="none" stroke="#8c8c8c"/><path d="M1 15.500h9l-4.500-6z" fill="#8c8c8c"/><path d="M0 8h12" stroke="#8c8c8c" stroke-dasharray="1 1"/><path d="M12 3c3 1.500 3.500 6 1.500 8.500" fill="none" stroke="#8c8c8c" stroke-width="1.300"/><path d="M11 10.500l5 0.500-3 4z" fill="#8c8c8c"/></svg>
<svg style="left:554px;top:42px" width="26" height="26" viewBox="0 0 26 26" shape-rendering="crispEdges"><path d="M0.500 4v-3.500h3.500M22 0.500h3.500v3.500M25.500 22v3.500h-3.500M4 25.500h-3.500v-3.500" fill="none" stroke="#8c8c8c" stroke-width="1"/></svg>
<span class="t" style="left:559px;top:42px;font-size:24px;color:#8c8c8c;font-family:'Liberation Serif',serif;text-shadow:none;">P</span>
<div style="left:584px;top:34px;width:1px;height:37px;background:#3a3a3a;"></div>
<div style="left:585px;top:34px;width:1px;height:37px;background:#565656;"></div>
<svg style="left:591px;top:32px" width="14" height="18" viewBox="0 0 14 18" ><path d="M2.500 5h8l-4-4.500z" fill="#8c8c8c"/><g transform="translate(0,6)" shape-rendering="crispEdges" fill="none" stroke="#8c8c8c"><rect x="4.500" y="0.500" width="4" height="3"/><path d="M6.500 4v3M1.500 10V7.500H11.500V10M6.500 7.500V10"/><rect x="0.500" y="9.500" width="2" height="2"/><rect x="5.500" y="9.500" width="2" height="2"/><rect x="10.500" y="9.500" width="2" height="2"/></g></svg>
<svg style="left:591px;top:55px" width="14" height="18" viewBox="0 0 14 18" ><g transform="translate(0,0)" shape-rendering="crispEdges" fill="none" stroke="#8c8c8c"><rect x="4.500" y="0.500" width="4" height="3"/><path d="M6.500 4v3M1.500 10V7.500H11.500V10M6.500 7.500V10"/><rect x="0.500" y="9.500" width="2" height="2"/><rect x="5.500" y="9.500" width="2" height="2"/><rect x="10.500" y="9.500" width="2" height="2"/></g><path d="M2.500 13.500h8l-4 4z" fill="#8c8c8c"/></svg>
<svg style="left:614px;top:34px" width="21" height="13" viewBox="0 0 21 13" ><path d="M5 2v8l-4.500-4z" fill="#d8d8d8"/><g transform="translate(7,0)" shape-rendering="crispEdges" fill="none" stroke="#d8d8d8"><rect x="4.500" y="0.500" width="4" height="3"/><path d="M6.500 4v3M1.500 10V7.500H11.500V10M6.500 7.500V10"/><rect x="0.500" y="9.500" width="2" height="2"/><rect x="5.500" y="9.500" width="2" height="2"/><rect x="10.500" y="9.500" width="2" height="2"/></g></svg>
<svg style="left:614px;top:57px" width="21" height="13" viewBox="0 0 21 13" ><g transform="translate(1,0)" shape-rendering="crispEdges" fill="none" stroke="#d8d8d8"><rect x="4.500" y="0.500" width="4" height="3"/><path d="M6.500 4v3M1.500 10V7.500H11.500V10M6.500 7.500V10"/><rect x="0.500" y="9.500" width="2" height="2"/><rect x="5.500" y="9.500" width="2" height="2"/><rect x="10.500" y="9.500" width="2" height="2"/></g><path d="M16 2v8l4.500-4z" fill="#d8d8d8"/></svg>
<div style="left:640px;top:34px;width:1px;height:37px;background:#3a3a3a;"></div>
<div style="left:641px;top:34px;width:1px;height:37px;background:#565656;"></div>
<div style="left:646px;top:34px;width:18px;height:18px;background:#3c3c3c;"></div>
<div style="left:647px;top:35px;width:16px;height:16px;background:#fff;"></div>
<svg style="left:647px;top:35px" width="16" height="16" viewBox="0 0 16 16" ><path d="M1 15L15 1" stroke="#f02a10" stroke-width="2.200"/></svg>
<div style="left:665px;top:35px;width:13px;height:14px;background:#5b5b5b;border:1px solid #353535;"></div>
<svg style="left:665px;top:35px" width="13" height="14" viewBox="0 0 13 14" ><path d="M4.5 3.5v7L9.5 7.0z" fill="#eaeaea"/></svg>
<div style="left:646px;top:55px;width:18px;height:18px;background:#3c3c3c;"></div>
<div style="left:647px;top:56px;width:16px;height:16px;background:#fff;"></div>
<div style="left:652px;top:61px;width:6px;height:6px;background:#464646;"></div>
<svg style="left:647px;top:56px" width="16" height="16" viewBox="0 0 16 16" ><path d="M2 14.500L14.500 2" stroke="#f02a10" stroke-width="2.200"/></svg>
<div style="left:665px;top:56px;width:13px;height:14px;background:#5b5b5b;border:1px solid #353535;"></div>
<svg style="left:665px;top:56px" width="13" height="14" viewBox="0 0 13 14" ><path d="M4.5 3.5v7L9.5 7.0z" fill="#eaeaea"/></svg>
<div style="left:684px;top:34px;width:1px;height:37px;background:#3a3a3a;"></div>
<div style="left:685px;top:34px;width:1px;height:37px;background:#565656;"></div>
<div style="left:690px;top:35px;width:14px;height:15px;background:#5b5b5b;border:1px solid #353535;"></div>
<div style="left:691px;top:42px;width:12px;height:1px;background:#3a3a3a;"></div>
<svg style="left:690px;top:35px" width="14" height="15" viewBox="0 0 14 15" ><path d="M4.0 6.0h6L7.0 2z" fill="#eaeaea"/><path d="M4.0 9.0h6L7.0 13z" fill="#eaeaea"/></svg>
<div style="left:705px;top:35px;width:51px;height:15px;background:#aaaaaa;border:1px solid #383838;box-shadow:inset 0 1px 0 rgba(0,0,0,.18);"></div>
<span class="t" style="left:708px;top:38px;font-size:9.2px;color:#1c1c1c;-webkit-text-stroke:0.12px;text-shadow:none;">0 Pt</span>
<div style="left:755px;top:35px;width:14px;height:15px;background:#5b5b5b;border:1px solid #353535;"></div>
<svg style="left:755px;top:35px" width="14" height="15" viewBox="0 0 14 15" ><path d="M3.5 5.5h7L7.0 10.5z" fill="#eaeaea"/></svg>
<div style="left:690px;top:56px;width:66px;height:14px;background:#aaaaaa;border:1px solid #383838;box-shadow:inset 0 1px 0 rgba(0,0,0,.18);"></div>
<div style="left:692px;top:58px;width:56px;height:10px;background:#000;"></div>
<div style="left:755px;top:56px;width:14px;height:14px;background:#5b5b5b;border:1px solid #353535;"></div>
<svg style="left:755px;top:56px" width="14" height="14" viewBox="0 0 14 14" ><path d="M3.5 5.0h7L7.0 10.0z" fill="#eaeaea"/></svg>
<div style="left:776px;top:34px;width:1px;height:37px;background:#3a3a3a;"></div>
<div style="left:777px;top:34px;width:1px;height:37px;background:#565656;"></div>
<svg style="left:785px;top:35px" width="17" height="14" viewBox="0 0 17 14" ><path d="M3.500 0.500h6v1h2.500v2.500h1v5h-1v2.500h-2.500v1h-6v-1h-2.500v-2.500h-1v-5h1v-2.500h2.500z" fill="#3a3a3a" stroke="#dcdcdc" stroke-dasharray="2 1"/><path d="M13 11h4l-2 2.500z" fill="#dcdcdc"/></svg>
<svg style="left:811px;top:35px" width="16" height="15" viewBox="0 0 16 15" ><rect x="3" y="3" width="12" height="11" fill="#2e2e2e" opacity="0.700"/><rect x="0.600" y="0.600" width="11.800" height="10.800" fill="#8c8c8c" stroke="#d4d4d4" stroke-width="1.200"/></svg>
<span class="t" style="left:836px;top:33px;font-size:16px;color:#dcdcdc;font-style:italic;text-shadow:none;letter-spacing:-0.5px;">fx</span>
<svg style="left:849px;top:45px" width="5" height="4" viewBox="0 0 5 4" ><path d="M0 0.500h4.500l-2.250 3z" fill="#dcdcdc"/></svg>
<svg style="left:783px;top:57px" width="12" height="12" viewBox="0 0 12 12" shape-rendering="crispEdges"><rect x="0.500" y="0.500" width="11" height="11" fill="#d4d4d4" stroke="#e4e4e4"/><path d="M1 1h3v3h-3zM7 1h3v3h-3zM4 4h3v3h-3zM1 7h3v3h-3zM7 7h3v3h-3z" fill="#7c7c7c"/></svg>
<div style="left:800px;top:56px;width:39px;height:14px;background:#aaaaaa;border:1px solid #383838;box-shadow:inset 0 1px 0 rgba(0,0,0,.18);"></div>
<span class="t" style="left:805px;top:59px;font-size:9.2px;color:#1c1c1c;-webkit-text-stroke:0.12px;text-shadow:none;">100 %</span>
<div style="left:838px;top:56px;width:14px;height:14px;background:#5b5b5b;border:1px solid #353535;"></div>
<svg style="left:838px;top:56px" width="14" height="14" viewBox="0 0 14 14" ><path d="M5.0 3.5v7L10.0 7.0z" fill="#eaeaea"/></svg>
<div style="left:859px;top:34px;width:1px;height:37px;background:#3a3a3a;"></div>
<div style="left:860px;top:34px;width:1px;height:37px;background:#565656;"></div>
<div style="left:862px;top:32px;width:23px;height:19px;background:#2e2e2e;border-radius:2px;"></div>
<svg style="left:866px;top:34px" width="15" height="14" viewBox="0 0 15 14" shape-rendering="crispEdges"><path d="M0 0.5h15" stroke="#e0e0e0" stroke-width="1"/><path d="M0 2.5h15" stroke="#e0e0e0" stroke-width="1"/><path d="M0 4.5h15" stroke="#e0e0e0" stroke-width="1"/><path d="M0 6.5h15" stroke="#e0e0e0" stroke-width="1"/><path d="M0 8.5h15" stroke="#e0e0e0" stroke-width="1"/><path d="M0 10.5h15" stroke="#e0e0e0" stroke-width="1"/><path d="M0 12.5h15" stroke="#e0e0e0" stroke-width="1"/><rect x="4" y="2" width="7" height="9" fill="none" stroke="#e0e0e0" stroke-width="0.600" opacity="0.500"/></svg>
<svg style="left:892px;top:34px" width="15" height="14" viewBox="0 0 15 14" shape-rendering="crispEdges"><path d="M0 0.5h15" stroke="#e0e0e0" stroke-width="1"/><path d="M0 2.5h15" stroke="#e0e0e0" stroke-width="1"/><path d="M0 10.5h15" stroke="#e0e0e0" stroke-width="1"/><path d="M0 12.5h15" stroke="#e0e0e0" stroke-width="1"/><path d="M0 4.5h3" stroke="#e0e0e0" stroke-width="1"/><path d="M0 6.5h3" stroke="#e0e0e0" stroke-width="1"/><path d="M0 8.5h3" stroke="#e0e0e0" stroke-width="1"/><path d="M12 4.5h3" stroke="#e0e0e0" stroke-width="1"/><path d="M12 6.5h3" stroke="#e0e0e0" stroke-width="1"/><path d="M12 8.5h3" stroke="#e0e0e0" stroke-width="1"/><rect x="4.500" y="2.500" width="6" height="8" fill="#8c8c8c" stroke="#dcdcdc"/></svg>
<svg style="left:866px;top:57px" width="15" height="14" viewBox="0 0 15 14" shape-rendering="crispEdges"><path d="M0 0.5h15" stroke="#e0e0e0" stroke-width="1"/><path d="M0 2.5h15" stroke="#e0e0e0" stroke-width="1"/><path d="M0 4.5h15" stroke="#e0e0e0" stroke-width="1"/><path d="M0 6.5h15" stroke="#e0e0e0" stroke-width="1"/><path d="M0 8.5h15" stroke="#e0e0e0" stroke-width="1"/><path d="M0 10.5h15" stroke="#e0e0e0" stroke-width="1"/><path d="M0 12.5h15" stroke="#e0e0e0" stroke-width="1"/><circle cx="7.500" cy="6.500" r="4.500" fill="#cfcfcf" stroke="#4a4a4a" shape-rendering="auto"/></svg>
<svg style="left:892px;top:57px" width="15" height="14" viewBox="0 0 15 14" shape-rendering="crispEdges"><path d="M0 0.5h15" stroke="#e0e0e0" stroke-width="1"/><path d="M0 2.5h15" stroke="#e0e0e0" stroke-width="1"/><path d="M0 10.5h15" stroke="#e0e0e0" stroke-width="1"/><path d="M0 12.5h15" stroke="#e0e0e0" stroke-width="1"/><rect x="4" y="4" width="7" height="5" fill="#cfcfcf"/></svg>
<div style="left:915px;top:34px;width:1px;height:37px;background:#3a3a3a;"></div>
<div style="left:916px;top:34px;width:1px;height:37px;background:#565656;"></div>
<svg style="left:920px;top:36px" width="15" height="15" viewBox="0 0 15 15" shape-rendering="crispEdges"><rect x="2.500" y="2.500" width="10" height="10" fill="#7a7a7a" stroke="#e4e4e4" stroke-width="1"/><rect x="0" y="0" width="3" height="3" fill="#4aa8ff"/><rect x="12" y="0" width="3" height="3" fill="#4aa8ff"/><rect x="0" y="12" width="3" height="3" fill="#4aa8ff"/><rect x="12" y="12" width="3" height="3" fill="#4aa8ff"/></svg>
<div style="left:940px;top:35px;width:14px;height:15px;background:#5b5b5b;border:1px solid #353535;"></div>
<div style="left:941px;top:42px;width:12px;height:1px;background:#3a3a3a;"></div>
<svg style="left:940px;top:35px" width="14" height="15" viewBox="0 0 14 15" ><path d="M4.0 6.0h6L7.0 2z" fill="#eaeaea"/><path d="M4.0 9.0h6L7.0 13z" fill="#eaeaea"/></svg>
<div style="left:955px;top:35px;width:48px;height:15px;background:#aaaaaa;border:1px solid #383838;box-shadow:inset 0 1px 0 rgba(0,0,0,.18);"></div>
<span class="t" style="left:958px;top:38px;font-size:9.2px;color:#1c1c1c;-webkit-text-stroke:0.12px;text-shadow:none;">4,233 mm</span>
<div style="left:940px;top:56px;width:29px;height:14px;background:#aaaaaa;border:1px solid #383838;box-shadow:inset 0 1px 0 rgba(0,0,0,.18);"></div>
<svg style="left:944px;top:58px" width="20" height="10" viewBox="0 0 20 10" ><path d="M0 1h16v9" fill="none" stroke="#1a1a1a" stroke-width="1.600"/></svg>
<div style="left:968px;top:56px;width:13px;height:14px;background:#5b5b5b;border:1px solid #353535;"></div>
<svg style="left:968px;top:56px" width="13" height="14" viewBox="0 0 13 14" ><path d="M3.0 5.0h7L6.5 10.0z" fill="#eaeaea"/></svg>
<div style="left:1011px;top:34px;width:1px;height:37px;background:#3a3a3a;"></div>
<div style="left:1012px;top:34px;width:1px;height:37px;background:#565656;"></div>
<svg style="left:1019px;top:35px" width="17" height="14" viewBox="0 0 17 14" ><path d="M1.500 1.500h9v9h-9z" fill="none" stroke="#dcdcdc" stroke-dasharray="1 1"/><rect x="0.5" y="0.5" width="2" height="2" fill="#4a4a4a" stroke="#e0e0e0"/><rect x="0.5" y="5.0" width="2" height="2" fill="#4a4a4a" stroke="#e0e0e0"/><rect x="0.5" y="9.5" width="2" height="2" fill="#4a4a4a" stroke="#e0e0e0"/><rect x="5.0" y="0.5" width="2" height="2" fill="#4a4a4a" stroke="#e0e0e0"/><rect x="5.0" y="9.5" width="2" height="2" fill="#4a4a4a" stroke="#e0e0e0"/><rect x="9.5" y="0.5" width="2" height="2" fill="#4a4a4a" stroke="#e0e0e0"/><rect x="9.5" y="5.0" width="2" height="2" fill="#4a4a4a" stroke="#e0e0e0"/><rect x="9.5" y="9.5" width="2" height="2" fill="#4a4a4a" stroke="#e0e0e0"/><path d="M12.500 10.500h4l-2 2.500z" fill="#dcdcdc"/></svg>
<div style="left:1040px;top:35px;width:118px;height:14px;background:#aaaaaa;border:1px solid #383838;box-shadow:inset 0 1px 0 rgba(0,0,0,.18);"></div>
<span class="t" style="left:1043px;top:38px;font-size:9.2px;color:#1c1c1c;-webkit-text-stroke:0.12px;text-shadow:none;">[Einfacher Grafikrahmen]+</span>
<div style="left:1157px;top:35px;width:14px;height:14px;background:#5b5b5b;border:1px solid #353535;"></div>
<svg style="left:1157px;top:35px" width="14" height="14" viewBox="0 0 14 14" ><path d="M3.5 5.0h7L7.0 10.0z" fill="#eaeaea"/></svg>
<svg style="left:1123px;top:58px" width="12" height="12" viewBox="0 0 12 12" ><rect x="0.500" y="0.500" width="7" height="7" fill="#6a6a6a" stroke="#8e8e8e"/><rect x="3.500" y="3.500" width="7" height="7" fill="#5a5a5a" stroke="#8e8e8e"/></svg>
<svg style="left:1135px;top:59px" width="9" height="11" viewBox="0 0 9 11" ><path d="M1 3.500h4c3 0 3 5 0 5h-2" fill="none" stroke="#8e8e8e" stroke-width="1.200"/><path d="M0 3.500l3-3v6z" fill="#8e8e8e"/></svg>
<svg style="left:1151px;top:59px" width="10" height="10" viewBox="0 0 10 10" shape-rendering="crispEdges"><rect x="0" y="0" width="10" height="10" fill="#e8e8e8"/><path d="M2 2h6v6h-6z" fill="#3a3a3a"/><path d="M0 4.500h2M8 4.500h2M4.500 0v2M4.500 8v2" stroke="#e8e8e8" stroke-width="1.400"/></svg>
<svg style="left:1162px;top:59px" width="9" height="10" viewBox="0 0 9 10" ><path d="M1 8.500l6.500-6.500M3.500 3l3 3M5 0.500v2.500M7.500 5.500h-2.500" stroke="#dcdcdc" stroke-width="1"/></svg>
<div style="left:1176px;top:34px;width:1px;height:37px;background:#3a3a3a;"></div>
<div style="left:1177px;top:34px;width:1px;height:37px;background:#565656;"></div>
<div style="left:1754px;top:77px;width:166px;height:906px;background:#4a4a4a;"></div>
<div style="left:1754px;top:77px;width:166px;height:12px;background:#2d2d2d;border-bottom:1px solid #262626;"></div>
<div style="left:1918px;top:89px;width:2px;height:894px;background:#3a3a3a;"></div>
<svg style="left:1906px;top:80px" width="9" height="7" viewBox="0 0 9 7" ><path d="M3.700 0.500v6L0.300 3.500zM7.700 0.500v6L4.300 3.500z" fill="#c8c8c8"/></svg>
<svg style="left:1826px;top:92px" width="20" height="4" viewBox="0 0 20 4" shape-rendering="crispEdges"><path d="M0 0v4M2 0v4M4 0v4M6 0v4M8 0v4M10 0v4M12 0v4M14 0v4M16 0v4M18 0v4" stroke="#1a1a1a" stroke-width="1" transform="translate(0.5,0)"/></svg>
<div style="left:1758px;top:100px;width:156px;height:25px;background:#303030;border-radius:3px;box-shadow:inset 0 1px 2px #1e1e1e, 0 1px 0 #5a5a5a;"></div>
<span class="t" style="left:1791px;top:108px;font-size:11px;color:#ececec;font-weight:bold;letter-spacing:-0.15px;">Seiten</span>
<svg style="left:1764px;top:104px" width="19" height="17" viewBox="0 0 19 17" ><defs><linearGradient id="dg1" x1="0" y1="0" x2="0" y2="1"><stop offset="0" stop-color="#f4f4f4"/><stop offset="1" stop-color="#b0b0b0"/></linearGradient></defs><path d="M1 5L4 2H7.600V14H1zM11 2H15.200L18.200 5V14H11z" fill="url(#dg1)"/><path d="M1 5.300H4.300V2M18.200 5.300H14.900V2" fill="none" stroke="#4a4a4a" stroke-width="0.800"/><path d="M9.500 0V16" stroke="#f8f8f8" stroke-width="1.200"/></svg>
<span class="t" style="left:1791px;top:136px;font-size:11px;color:#ececec;font-weight:bold;letter-spacing:-0.15px;">Ebenen</span>
<svg style="left:1764px;top:131px" width="18" height="18" viewBox="0 0 18 18" ><path d="M2.300 9.600L0.500 11L9 17L17.500 11L15.700 9.600L9 14z" fill="#bcbcbc"/><path d="M9 0.500L17.500 6.200L9 12L0.500 6.200z" fill="#e2e2e2"/></svg>
<span class="t" style="left:1791px;top:164px;font-size:11px;color:#ececec;font-weight:bold;letter-spacing:-0.15px;">Verknüpfungen</span>
<svg style="left:1764px;top:161px" width="18" height="15" viewBox="0 0 18 15" ><path d="M7 3.500h-3c-4.500 0-4.500 8 0 8h3M10.500 3.500h3c4.500 0 4.500 8 0 8h-3" fill="none" stroke="#d4d4d4" stroke-width="2"/><path d="M5 7.500h7.500" stroke="#d4d4d4" stroke-width="2"/></svg>
<div style="left:1754px;top:185px;width:164px;height:1px;background:#2c2c2c;"></div>
<div style="left:1754px;top:186px;width:164px;height:1px;background:#565656;"></div>
<svg style="left:1826px;top:189px" width="20" height="4" viewBox="0 0 20 4" shape-rendering="crispEdges"><path d="M0 0v4M2 0v4M4 0v4M6 0v4M8 0v4M10 0v4M12 0v4M14 0v4M16 0v4M18 0v4" stroke="#1a1a1a" stroke-width="1" transform="translate(0.5,0)"/></svg>
<span class="t" style="left:1791px;top:205px;font-size:11px;color:#ececec;font-weight:bold;letter-spacing:-0.15px;">Farbfelder</span>
<svg style="left:1765px;top:204px" width="17" height="12" viewBox="0 0 17 12" ><rect x="0.500" y="0.500" width="16" height="11" fill="#c8c8c8" stroke="#d4d4d4"/><rect x="1.5" y="1.5" width="4" height="4" fill="#1e1e1e"/><rect x="6.5" y="1.5" width="4" height="4" fill="#5c5c5c"/><rect x="11.5" y="1.5" width="4" height="4" fill="#8e8e8e"/><rect x="1.5" y="6.5" width="4" height="4" fill="#7a7a7a"/><rect x="6.5" y="6.5" width="4" height="4" fill="#6a6a6a"/><rect x="11.5" y="6.5" width="4" height="4" fill="#444"/></svg>
<span class="t" style="left:1791px;top:233px;font-size:11px;color:#ececec;font-weight:bold;letter-spacing:-0.15px;">Kontur</span>
<svg style="left:1765px;top:230px" width="18" height="14" viewBox="0 0 18 14" shape-rendering="crispEdges"><path d="M0 1h18" stroke="#d4d4d4" stroke-width="1"/><path d="M0 6h18" stroke="#d4d4d4" stroke-width="2"/><path d="M0 12h18" stroke="#d4d4d4" stroke-width="3"/></svg>
<span class="t" style="left:1791px;top:261px;font-size:11px;color:#ececec;font-weight:bold;letter-spacing:-0.15px;">Verlauf</span>
<svg style="left:1765px;top:259px" width="18" height="13" viewBox="0 0 18 13" ><defs><linearGradient id="dg2" x1="0" y1="0" x2="1" y2="0"><stop offset="0" stop-color="#2a2a2a"/><stop offset="1" stop-color="#dcdcdc"/></linearGradient></defs><rect x="0.600" y="0.600" width="16.800" height="11.800" fill="url(#dg2)" stroke="#d4d4d4" stroke-width="1.200"/></svg>
<div style="left:1754px;top:282px;width:164px;height:1px;background:#2c2c2c;"></div>
<div style="left:1754px;top:283px;width:164px;height:1px;background:#565656;"></div>
<svg style="left:1826px;top:286px" width="20" height="4" viewBox="0 0 20 4" shape-rendering="crispEdges"><path d="M0 0v4M2 0v4M4 0v4M6 0v4M8 0v4M10 0v4M12 0v4M14 0v4M16 0v4M18 0v4" stroke="#1a1a1a" stroke-width="1" transform="translate(0.5,0)"/></svg>
<span class="t" style="left:1791px;top:302px;font-size:11px;color:#ececec;font-weight:bold;letter-spacing:-0.15px;">Effekte</span>
<span class="t" style="left:1766px;top:296px;font-size:19px;color:#d0d0d0;font-style:italic;text-shadow:none;letter-spacing:-0.5px;">fx</span>
<div style="left:1754px;top:323px;width:164px;height:1px;background:#2c2c2c;"></div>
<div style="left:1754px;top:324px;width:164px;height:1px;background:#565656;"></div>
<svg style="left:1826px;top:327px" width="20" height="4" viewBox="0 0 20 4" shape-rendering="crispEdges"><path d="M0 0v4M2 0v4M4 0v4M6 0v4M8 0v4M10 0v4M12 0v4M14 0v4M16 0v4M18 0v4" stroke="#1a1a1a" stroke-width="1" transform="translate(0.5,0)"/></svg>
<span class="t" style="left:1791px;top:343px;font-size:11px;color:#ececec;font-weight:bold;letter-spacing:-0.15px;">Zeichenformate</span>
<svg style="left:1764px;top:337px" width="20" height="22" viewBox="0 0 20 22" ><rect x="0.700" y="10.200" width="5.600" height="5.600" fill="#4a4a4a" stroke="#d4d4d4" stroke-width="1.400"/><rect x="3.700" y="13.700" width="5.600" height="5.600" fill="#4a4a4a" stroke="#d4d4d4" stroke-width="1.400"/></svg>
<span class="t" style="left:1771px;top:336px;font-size:16px;color:#d4d4d4;font-weight:bold;text-shadow:none;">A</span>
<span class="t" style="left:1791px;top:371px;font-size:11px;color:#ececec;font-weight:bold;letter-spacing:-0.15px;">Absatzformate</span>
<svg style="left:1764px;top:365px" width="20" height="22" viewBox="0 0 20 22" ><rect x="0.700" y="10.200" width="5.600" height="5.600" fill="#4a4a4a" stroke="#d4d4d4" stroke-width="1.400"/><rect x="3.700" y="13.700" width="5.600" height="5.600" fill="#4a4a4a" stroke="#d4d4d4" stroke-width="1.400"/><path d="M11 1h6M13.500 1v11M16.500 1v11" stroke="#d4d4d4" stroke-width="1.200" fill="none"/><path d="M13.500 1h-2c-4 0-4 6 0 6h2z" fill="#d4d4d4"/></svg>
<span class="t" style="left:1791px;top:399px;font-size:11px;color:#ececec;font-weight:bold;letter-spacing:-0.15px;">Objektformate</span>
<svg style="left:1764px;top:393px" width="20" height="22" viewBox="0 0 20 22" ><rect x="6.500" y="2.500" width="11" height="12" fill="#8a8a8a" stroke="#d4d4d4" stroke-dasharray="3 1.500"/><rect x="0.700" y="10.200" width="5.600" height="5.600" fill="#4a4a4a" stroke="#d4d4d4" stroke-width="1.400"/><rect x="3.700" y="13.700" width="5.600" height="5.600" fill="#4a4a4a" stroke="#d4d4d4" stroke-width="1.400"/></svg>
<div style="left:1754px;top:420px;width:164px;height:1px;background:#2c2c2c;"></div>
<div style="left:1754px;top:421px;width:164px;height:1px;background:#565656;"></div>
<svg style="left:1826px;top:424px" width="20" height="4" viewBox="0 0 20 4" shape-rendering="crispEdges"><path d="M0 0v4M2 0v4M4 0v4M6 0v4M8 0v4M10 0v4M12 0v4M14 0v4M16 0v4M18 0v4" stroke="#1a1a1a" stroke-width="1" transform="translate(0.5,0)"/></svg>
<span class="t" style="left:1791px;top:440px;font-size:11px;color:#ececec;font-weight:bold;letter-spacing:-0.15px;">Tabelle</span>
<svg style="left:1766px;top:438px" width="16" height="14" viewBox="0 0 16 14" ><rect x="0.600" y="0.600" width="14.800" height="12.800" fill="none" stroke="#d4d4d4" stroke-width="1.200"/><path d="M1 3.500h14M1 6.500h14M1 9.500h14M4.500 3.500v10" stroke="#d4d4d4" stroke-width="1"/><rect x="1" y="1" width="14" height="2.500" fill="#d4d4d4"/></svg>
<span class="t" style="left:1791px;top:468px;font-size:11px;color:#ececec;font-weight:bold;letter-spacing:-0.15px;">Tabellenformate</span>
<svg style="left:1764px;top:462px" width="20" height="22" viewBox="0 0 20 22" ><rect x="0.700" y="10.200" width="5.600" height="5.600" fill="#4a4a4a" stroke="#d4d4d4" stroke-width="1.400"/><rect x="3.700" y="13.700" width="5.600" height="5.600" fill="#4a4a4a" stroke="#d4d4d4" stroke-width="1.400"/><rect x="6.500" y="1.500" width="11" height="9" fill="none" stroke="#d4d4d4"/><path d="M7 4.500h10M7 7.500h10M10.500 4.500v6" stroke="#d4d4d4"/><rect x="7" y="2" width="10" height="2" fill="#d4d4d4"/></svg>
<span class="t" style="left:1791px;top:496px;font-size:11px;color:#ececec;font-weight:bold;letter-spacing:-0.15px;">Zellenformate</span>
<svg style="left:1764px;top:490px" width="20" height="22" viewBox="0 0 20 22" ><rect x="0.700" y="10.200" width="5.600" height="5.600" fill="#4a4a4a" stroke="#d4d4d4" stroke-width="1.400"/><rect x="3.700" y="13.700" width="5.600" height="5.600" fill="#4a4a4a" stroke="#d4d4d4" stroke-width="1.400"/><rect x="6.500" y="1.500" width="11" height="9" fill="none" stroke="#d4d4d4"/><rect x="7" y="2" width="10" height="2" fill="#d4d4d4"/><rect x="10" y="5.500" width="6" height="4" fill="#a8a8a8"/></svg>
<div style="left:1754px;top:517px;width:164px;height:1px;background:#2c2c2c;"></div>
<div style="left:1754px;top:518px;width:164px;height:1px;background:#565656;"></div>
<svg style="left:1826px;top:521px" width="20" height="4" viewBox="0 0 20 4" shape-rendering="crispEdges"><path d="M0 0v4M2 0v4M4 0v4M6 0v4M8 0v4M10 0v4M12 0v4M14 0v4M16 0v4M18 0v4" stroke="#1a1a1a" stroke-width="1" transform="translate(0.5,0)"/></svg>
<span class="t" style="left:1791px;top:537px;font-size:11px;color:#ececec;font-weight:bold;letter-spacing:-0.15px;">Datenzusammenführ...</span>
<svg style="left:1762px;top:531px" width="22" height="22" viewBox="0 0 22 22" ><path d="M6.500 4V1.500H13.500L18.500 6.500V9.500M6.500 11.500V14.500H9" fill="none" stroke="#d4d4d4" stroke-width="1"/><path d="M13.500 1.500V6.500H18.500" fill="none" stroke="#d4d4d4" stroke-width="1"/><path d="M1 6.500h4.500v3h-4.500z" fill="#ececec"/><path d="M5 4L10.500 8L5 12z" fill="#ececec"/><path d="M17.50 15.00L20.00 15.00" stroke="#e4e4e4" stroke-width="2"/><path d="M16.77 16.77L18.54 18.54" stroke="#e4e4e4" stroke-width="2"/><path d="M15.00 17.50L15.00 20.00" stroke="#e4e4e4" stroke-width="2"/><path d="M13.23 16.77L11.46 18.54" stroke="#e4e4e4" stroke-width="2"/><path d="M12.50 15.00L10.00 15.00" stroke="#e4e4e4" stroke-width="2"/><path d="M13.23 13.23L11.46 11.46" stroke="#e4e4e4" stroke-width="2"/><path d="M15.00 12.50L15.00 10.00" stroke="#e4e4e4" stroke-width="2"/><path d="M16.77 13.23L18.54 11.46" stroke="#e4e4e4" stroke-width="2"/><circle cx="15" cy="15" r="3.300" fill="#e4e4e4"/><circle cx="15" cy="15" r="1.100" fill="#3c3c3c"/></svg>
<span class="t" style="left:1791px;top:565px;font-size:11px;color:#ececec;font-weight:bold;letter-spacing:-0.15px;">Skripte</span>
<svg style="left:1765px;top:559px" width="17" height="21" viewBox="0 0 17 21" ><defs><linearGradient id="dg3" x1="0" y1="0" x2="0" y2="1"><stop offset="0" stop-color="#e4e4e4"/><stop offset="1" stop-color="#b8b8b8"/></linearGradient></defs><path d="M12 1.500C9 1 3 4 2 8C1.500 10.500 4 12 7 13C9 13.800 9 15 7 16C5 17 2.500 17.500 2 18.500C3 20.500 8 20 11 18.500C14.500 16.500 16 14 14.500 11.500C13 9 9 8.500 8.500 7C8.300 5.500 10 4.500 12.500 4Z" fill="url(#dg3)"/><path d="M7.500 3.500C6.500 4.500 6 6 7 7.500M8 16.500C9 17 9.500 18 9 19" fill="none" stroke="#6a6a6a" stroke-width="0.800"/></svg>
<div style="left:1754px;top:586px;width:164px;height:1px;background:#2c2c2c;"></div>
<div style="left:1754px;top:587px;width:164px;height:1px;background:#565656;"></div>
<svg style="left:1826px;top:590px" width="20" height="4" viewBox="0 0 20 4" shape-rendering="crispEdges"><path d="M0 0v4M2 0v4M4 0v4M6 0v4M8 0v4M10 0v4M12 0v4M14 0v4M16 0v4M18 0v4" stroke="#1a1a1a" stroke-width="1" transform="translate(0.5,0)"/></svg>
<span class="t" style="left:1791px;top:606px;font-size:11px;color:#ececec;font-weight:bold;letter-spacing:-0.15px;">Glyphen</span>
<span class="t" style="left:1766px;top:600px;font-size:21px;color:#cfcfcf;font-family:'Liberation Serif',serif;font-style:italic;text-shadow:none;">A</span>
<span class="t" style="left:1791px;top:634px;font-size:11px;color:#ececec;font-weight:bold;letter-spacing:-0.15px;">Zeichen</span>
<span class="t" style="left:1765px;top:629px;font-size:19px;color:#cfcfcf;text-shadow:none;">A</span>
<div style="left:1779px;top:630px;width:1px;height:18px;background:#cfcfcf;"></div>
<span class="t" style="left:1791px;top:662px;font-size:11px;color:#ececec;font-weight:bold;letter-spacing:-0.15px;">Absatz</span>
<svg style="left:1766px;top:659px" width="12" height="17" viewBox="0 0 12 17" ><path d="M4 0.500h7.500M7.500 0.500v16M10.500 0.500v16" stroke="#d4d4d4" stroke-width="1.300" fill="none"/><path d="M7.500 0.500h-3c-5 0-5 8 0 8h3z" fill="#d4d4d4"/></svg>
<div style="left:1754px;top:683px;width:164px;height:1px;background:#2c2c2c;"></div>
<div style="left:1754px;top:684px;width:164px;height:1px;background:#565656;"></div>
<div style="left:1544px;top:86px;width:209px;height:489px;background:#262626;"></div>
<div style="left:1545px;top:90px;width:207px;height:484px;background:#4a4a4a;"></div>
<div style="left:1545px;top:90px;width:207px;height:17px;background:#333;border-bottom:1px solid #2a2a2a;"></div>
<div style="left:1545px;top:90px;width:50px;height:17px;background:#4a4a4a;border-top:1px solid #5c5c5c;"></div>
<div style="left:1595px;top:90px;width:1px;height:17px;background:#262626;"></div>
<div style="left:1596px;top:90px;width:43px;height:16px;background:#3d3d3d;border-top:1px solid #4a4a4a;overflow:hidden;"></div>
<div style="left:1638px;top:90px;width:1px;height:17px;background:#262626;"></div>
<div style="left:1639px;top:90px;width:49px;height:16px;background:#3d3d3d;border-top:1px solid #4a4a4a;"></div>
<div style="left:1687px;top:90px;width:1px;height:17px;background:#262626;"></div>
<svg style="left:1549px;top:93px" width="7" height="11" viewBox="0 0 7 11" ><path d="M1 4.200L3.500 1.500l2.500 2.700M1 6.800l2.500 2.700 2.500-2.700" fill="none" stroke="#e0e0e0" stroke-width="1.200"/></svg>
<span class="t" style="left:1558px;top:93px;font-size:11px;color:#f0f0f0;font-weight:bold;letter-spacing:-0.3px;">Seiten</span>
<div style="left:1596px;top:91px;width:42px;height:15px;overflow:hidden;"><span class="t" style="left:6px;top:2px;font-size:11px;font-weight:bold;color:#bababa;letter-spacing:-0.45px;">Ebenen</span></div>
<div style="left:1639px;top:91px;width:48px;height:15px;overflow:hidden;"><span class="t" style="left:6px;top:2px;font-size:11px;font-weight:bold;color:#bababa;letter-spacing:-0.3px;">Verknüp</span></div>
<svg style="left:1712px;top:95px" width="10" height="8" viewBox="0 0 10 8" ><path d="M0.500 0.300v7.400L4.500 4zM5.500 0.300v7.400L9.500 4z" fill="#d8d8d8"/></svg>
<div style="left:1727px;top:92px;width:1px;height:13px;background:#6a6a6a;"></div>
<div style="left:1729px;top:92px;width:1px;height:13px;background:#6a6a6a;"></div>
<svg style="left:1734px;top:95px" width="15" height="8" viewBox="0 0 15 8" shape-rendering="crispEdges"><path d="M0 2h5L2.500 5z" fill="#d6d6d6" shape-rendering="auto"/><path d="M6 1h8M6 3h8M6 5h8M6 7h8" stroke="#d6d6d6" stroke-width="1" transform="translate(0,-0.5)"/></svg>
<div style="left:1740px;top:107px;width:12px;height:140px;background:#3b3b3b;"></div>
<svg style="left:1741px;top:112px" width="9" height="6" viewBox="0 0 9 6" ><path d="M0.500 5.500h8L4.500 0.500z" fill="#7e7e7e"/></svg>
<svg style="left:1741px;top:236px" width="9" height="6" viewBox="0 0 9 6" ><path d="M0.500 0.500h8L4.500 5.500z" fill="#7e7e7e"/></svg>
<span class="t" style="left:1548px;top:121px;font-size:9.2px;color:#d2d2d2;-webkit-text-stroke:0.12px;text-shadow:none;">[Ohne]</span>
<span class="t" style="left:1548px;top:150px;font-size:9.2px;color:#d2d2d2;-webkit-text-stroke:0.12px;text-shadow:none;">A-Musterseite</span>
<div style="left:1713px;top:112px;width:18px;height:23px;background:#fff;border:1px solid #c8c8c8;"></div>
<div style="left:1713px;top:141px;width:18px;height:23px;background:#fff;border:1px solid #c8c8c8;"></div>
<div style="left:1545px;top:247px;width:207px;height:2px;background:#5c5c5c;"></div>
<div style="left:1545px;top:249px;width:207px;height:2px;background:#383838;"></div>
<div style="left:1545px;top:251px;width:207px;height:19px;background:#4c4c4c;"></div>
<div style="left:1545px;top:270px;width:207px;height:1px;background:#333;"></div>
<div style="left:1545px;top:271px;width:207px;height:1px;background:#5a5a5a;"></div>
<svg style="left:1549px;top:255px" width="4" height="10" viewBox="0 0 4 10" shape-rendering="crispEdges"><path d="M0 0h4M0 2h4M0 4h4M0 6h4M0 8h4" stroke="#1a1a1a" stroke-width="1" transform="translate(0,0.5)"/></svg>
<span class="t" style="left:1572px;top:255px;font-size:10px;color:#ececec;transform:scaleX(0.95);transform-origin:0 50%;font-weight:bold;font-size:9.5px;">A4 V</span>
<svg style="left:1607px;top:258px" width="8" height="5" viewBox="0 0 8 5" ><path d="M0.500 0.500h7L4 4.500z" fill="#e0e0e0"/></svg>
<div style="left:1616px;top:251px;width:1px;height:17px;background:#6a6a6a;"></div>
<div style="left:1740px;top:272px;width:12px;height:273px;background:#3b3b3b;"></div>
<svg style="left:1741px;top:276px" width="9" height="6" viewBox="0 0 9 6" ><path d="M0.500 5.500h8L4.500 0.500z" fill="#7e7e7e"/></svg>
<svg style="left:1741px;top:536px" width="9" height="6" viewBox="0 0 9 6" ><path d="M0.500 0.500h8L4.500 5.500z" fill="#7e7e7e"/></svg>
<svg style="left:1573px;top:274px" width="14" height="6" viewBox="0 0 14 6" ><path d="M0.500 0h13L7 5.500z" fill="#8a8a8a"/></svg>
<div style="left:1568px;top:280px;width:26px;height:36px;background:#fff;border:1px solid #b8b8b8;"></div>
<span class="t" style="left:1578px;top:282px;font-size:10px;color:#111;transform:scaleX(1);transform-origin:0 50%;text-shadow:none;">A</span>
<svg style="left:1593px;top:276px" width="5" height="43" viewBox="0 0 5 43" ><path d="M0 1h3.500v41h-3.500" fill="none" stroke="#d0d0d0" stroke-width="1.400"/></svg>
<span class="t" style="left:1578px;top:323px;font-size:10px;color:#b4b4b4;transform:scaleX(0.9);transform-origin:0 50%;font-weight:bold;text-shadow:none;">1</span>
<div style="left:1568px;top:344px;width:26px;height:36px;background:#a4a8b8;border:1px solid #b4b8c4;"></div>
<div style="left:1578px;top:346px;width:7px;height:8px;background:#fff;"></div>
<span class="t" style="left:1578px;top:346px;font-size:9px;color:#000;font-weight:bold;text-shadow:none;">A</span>
<div style="left:1574px;top:385px;width:11px;height:12px;background:#4b5878;"></div>
<span class="t" style="left:1576px;top:386px;font-size:10px;color:#fff;font-weight:bold;text-shadow:none;">2</span>
<svg style="left:1595px;top:290px" width="50" height="80" viewBox="0 0 50 80" ><path d="M41.400 71.800L14.200 22.600" stroke="#e8541a" stroke-width="2.200"/><path d="M5.300 6.400L9.900 25.600 18.500 19.600z" fill="#e8541a"/></svg>
<div style="left:1545px;top:545px;width:207px;height:1px;background:#2e2e2e;"></div>
<div style="left:1545px;top:546px;width:207px;height:21px;background:#484848;border-top:1px solid #585858;"></div>
<span class="t" style="left:1547px;top:553px;font-size:9.2px;color:#ececec;-webkit-text-stroke:0.12px;">2 Seiten auf 2 Druckbög</span>
<svg style="left:1651px;top:550px" width="18" height="13" viewBox="0 0 18 13" ><path d="M0.500 5h6v7.500h-6z" fill="#cfcfcf"/><path d="M5.500 1.500h5l3 3v8h-8z" fill="#dedede" stroke="#484848" stroke-width="0.800"/><path d="M10.500 1.500v3h3" fill="none" stroke="#484848" stroke-width="0.800"/><path d="M8 6v5M6 8.500h4" stroke="#484848" stroke-width="1" stroke-dasharray="1 1"/><path d="M14.500 10.500h3.500l-1.750 2.500z" fill="#dcdcdc"/></svg>
<svg style="left:1685px;top:551px" width="11" height="12" viewBox="0 0 11 12" ><path d="M0.500 0.500H10.500V11H4.500L0.500 7z" fill="#d6d6d6"/><path d="M0.500 7H4.500V11z" fill="#8c8c8c"/><path d="M0.500 7H4.500V11" fill="none" stroke="#484848" stroke-width="0.800"/></svg>
<svg style="left:1714px;top:550px" width="12" height="13" viewBox="0 0 12 13" ><path d="M0.500 3.500h11" stroke="#cfcfcf" stroke-width="1.400"/><path d="M4 3v-1.500h4v1.500" fill="none" stroke="#cfcfcf" stroke-width="1.200"/><path d="M1.500 5h9l-0.800 7.500h-7.400z" fill="none" stroke="#cfcfcf" stroke-width="1.200"/><path d="M4.300 6v5.500M6 6v5.500M7.700 6v5.500" stroke="#cfcfcf" stroke-width="1"/></svg>
<svg style="left:1741px;top:555px" width="10" height="10" viewBox="0 0 10 10" shape-rendering="crispEdges"><path d="M0 8h1M2 6h1M2 8h1M4 4h1M4 6h1M4 8h1M6 2h1M6 4h1M6 6h1M6 8h1M8 0h1M8 2h1M8 4h1M8 6h1M8 8h1" stroke="#1c1c1c" stroke-width="1" transform="translate(0,0.5)"/></svg>
<div style="left:1545px;top:567px;width:207px;height:7px;background:#454545;border-top:1px solid #2e2e2e;"></div>
<svg style="left:1639px;top:569px" width="20" height="4" viewBox="0 0 20 4" shape-rendering="crispEdges"><path d="M0 0v4M2 0v4M4 0v4M6 0v4M8 0v4M10 0v4M12 0v4M14 0v4M16 0v4M18 0v4" stroke="#141414" stroke-width="1" transform="translate(0.5,0)"/></svg>
<div style="left:1544px;top:574px;width:209px;height:1px;background:#262626;"></div>
<div style="left:122px;top:429px;width:209px;height:368px;background:#262626;border-radius:5px 5px 0 0;box-shadow:0 1px 4px rgba(0,0,0,.35);"></div>
<div style="left:123px;top:430px;width:207px;height:13px;background:#2c2c2c;border-radius:4px 4px 0 0;border-top:1px solid #444;"></div>
<svg style="left:127px;top:433px" width="8" height="8" viewBox="0 0 8 8" ><path d="M1.200 1.200l5 5M6.200 1.200l-5 5" stroke="#e0e0e0" stroke-width="1.400"/></svg>
<svg style="left:318px;top:433px" width="9" height="7" viewBox="0 0 9 7" ><path d="M3.700 0.500v6L0.300 3.500zM7.700 0.500v6L4.300 3.500z" fill="#c8c8c8"/></svg>
<div style="left:123px;top:443px;width:207px;height:17px;background:#333;border-bottom:1px solid #2a2a2a;"></div>
<div style="left:123px;top:443px;width:75px;height:17px;background:#4a4a4a;border-top:1px solid #5c5c5c;"></div>
<div style="left:198px;top:443px;width:1px;height:17px;background:#262626;"></div>
<div style="left:199px;top:443px;width:66px;height:16px;background:#3d3d3d;border-top:1px solid #4a4a4a;"></div>
<div style="left:265px;top:443px;width:1px;height:17px;background:#262626;"></div>
<svg style="left:127px;top:446px" width="7" height="11" viewBox="0 0 7 11" ><path d="M1 4.200L3.500 1.500l2.500 2.700M1 6.800l2.500 2.700 2.500-2.700" fill="none" stroke="#e0e0e0" stroke-width="1.200"/></svg>
<span class="t" style="left:136px;top:446px;font-size:11px;color:#f0f0f0;font-weight:bold;letter-spacing:-0.25px;">Ausrichten</span>
<span class="t" style="left:205px;top:446px;font-size:11px;color:#b4b4b4;font-weight:bold;letter-spacing:-0.15px;">Pathfinder</span>
<svg style="left:312px;top:448px" width="15" height="8" viewBox="0 0 15 8" shape-rendering="crispEdges"><path d="M0 2h5L2.500 5z" fill="#d6d6d6" shape-rendering="auto"/><path d="M6 1h8M6 3h8M6 5h8M6 7h8" stroke="#d6d6d6" stroke-width="1" transform="translate(0,-0.5)"/></svg>
<div style="left:123px;top:460px;width:207px;height:193px;background:#4a4a4a;"></div>
<span class="t" style="left:127px;top:468px;font-size:9.2px;color:#ececec;-webkit-text-stroke:0.12px;">Objekte ausrichten:</span>
<svg style="left:132px;top:482px" width="15" height="15" viewBox="0 0 15 15" shape-rendering="crispEdges"><path d="M0.500 0v15" stroke="#e0e0e0"/><rect x="3" y="1" width="6" height="5" fill="#cdcdcd"/><rect x="3.500" y="8.500" width="10" height="4" fill="none" stroke="#e0e0e0"/></svg>
<svg style="left:165px;top:481px" width="14" height="17" viewBox="0 0 14 17" shape-rendering="crispEdges"><path d="M6.500 0v17" stroke="#e0e0e0"/><rect x="4" y="3" width="6" height="5" fill="#cdcdcd"/><rect x="1.500" y="10.500" width="10" height="4" fill="#4a4a4a" stroke="#e0e0e0"/></svg>
<svg style="left:197px;top:482px" width="15" height="15" viewBox="0 0 15 15" shape-rendering="crispEdges"><path d="M13.500 0v15" stroke="#e0e0e0"/><rect x="6" y="1" width="6" height="5" fill="#cdcdcd"/><rect x="1.500" y="8.500" width="10" height="4" fill="none" stroke="#e0e0e0"/></svg>
<svg style="left:237px;top:481px" width="16" height="15" viewBox="0 0 16 15" shape-rendering="crispEdges"><path d="M0 0.500h16" stroke="#e0e0e0"/><rect x="1.500" y="3.500" width="4" height="10" fill="none" stroke="#e0e0e0"/><rect x="9" y="3" width="5" height="6" fill="#cdcdcd"/></svg>
<svg style="left:269px;top:482px" width="17" height="14" viewBox="0 0 17 14" shape-rendering="crispEdges"><path d="M0 6.500h17" stroke="#e0e0e0"/><rect x="2.500" y="1.500" width="4" height="10" fill="#4a4a4a" stroke="#e0e0e0"/><rect x="10" y="4" width="5" height="6" fill="#cdcdcd"/></svg>
<svg style="left:301px;top:483px" width="16" height="15" viewBox="0 0 16 15" shape-rendering="crispEdges"><path d="M0 14.500h16" stroke="#e0e0e0"/><rect x="2.500" y="1.500" width="4" height="10" fill="none" stroke="#e0e0e0"/><rect x="9" y="6" width="5" height="6" fill="#cdcdcd"/></svg>
<div style="left:128px;top:502px;width:197px;height:1px;background:#3c3c3c;"></div>
<div style="left:128px;top:503px;width:197px;height:1px;background:#565656;"></div>
<span class="t" style="left:127px;top:508px;font-size:9.2px;color:#ececec;-webkit-text-stroke:0.12px;">Objekte verteilen:</span>
<svg style="left:132px;top:522px" width="17" height="14" viewBox="0 0 17 14" shape-rendering="crispEdges"><path d="M0 0.500h17M0 8.500h17" stroke="#e0e0e0"/><rect x="5" y="2" width="6" height="4" fill="#cdcdcd"/><rect x="3.500" y="8.500" width="9" height="4" fill="none" stroke="#e0e0e0"/></svg>
<svg style="left:164px;top:521px" width="17" height="15" viewBox="0 0 17 15" shape-rendering="crispEdges"><path d="M0 3.500h17M0 10.500h17" stroke="#e0e0e0"/><rect x="5" y="1" width="6" height="5" fill="#cdcdcd"/><rect x="3.500" y="8.500" width="9" height="4" fill="#4a4a4a" stroke="#e0e0e0"/></svg>
<svg style="left:196px;top:521px" width="17" height="15" viewBox="0 0 17 15" shape-rendering="crispEdges"><path d="M0 6.500h17M0 13.500h17" stroke="#e0e0e0"/><rect x="5" y="2" width="6" height="4" fill="#cdcdcd"/><rect x="3.500" y="9.500" width="9" height="4" fill="none" stroke="#e0e0e0"/></svg>
<svg style="left:239px;top:520px" width="14" height="17" viewBox="0 0 14 17" shape-rendering="crispEdges"><path d="M0.500 0v17M7.500 0v17" stroke="#e0e0e0"/><rect x="0.500" y="4.500" width="4" height="8" fill="none" stroke="#e0e0e0"/><rect x="8" y="5" width="4" height="6" fill="#cdcdcd"/></svg>
<svg style="left:271px;top:520px" width="14" height="17" viewBox="0 0 14 17" shape-rendering="crispEdges"><path d="M3.500 0v17M10.500 0v17" stroke="#e0e0e0"/><rect x="1.500" y="4.500" width="4" height="8" fill="#4a4a4a" stroke="#e0e0e0"/><rect x="8" y="5" width="5" height="6" fill="#cdcdcd"/></svg>
<svg style="left:301px;top:520px" width="14" height="17" viewBox="0 0 14 17" shape-rendering="crispEdges"><path d="M5.500 0v17M12.500 0v17" stroke="#e0e0e0"/><rect x="1" y="5" width="4" height="6" fill="#cdcdcd"/><rect x="8.500" y="4.500" width="4" height="8" fill="none" stroke="#e0e0e0"/></svg>
<div style="left:129px;top:543px;width:13px;height:13px;background:#575757;border:1px solid #363636;box-shadow:inset 0 1px 0 #666;"></div>
<span class="t" style="left:145px;top:546px;font-size:9.2px;color:#ececec;-webkit-text-stroke:0.12px;">Abstand verwenden</span>
<div style="left:239px;top:543px;width:13px;height:14px;background:#5b5b5b;border:1px solid #353535;"></div>
<div style="left:240px;top:550px;width:11px;height:1px;background:#3a3a3a;"></div>
<svg style="left:239px;top:543px" width="13" height="14" viewBox="0 0 13 14" ><path d="M3.5 5.5h6L6.5 2z" fill="#7d7d7d"/><path d="M3.5 8.5h6L6.5 12z" fill="#7d7d7d"/></svg>
<div style="left:255px;top:544px;width:47px;height:13px;background:#b2b2b2;border:1px solid #383838;box-shadow:inset 0 1px 0 rgba(0,0,0,.18);"></div>
<span class="t" style="left:258px;top:547px;font-size:9.2px;color:#8a8a8a;-webkit-text-stroke:0.12px;text-shadow:none;">0 mm</span>
<span class="t" style="left:179px;top:571px;font-size:9.2px;color:#ececec;-webkit-text-stroke:0.12px;">Ausrichten an:</span>
<svg style="left:241px;top:565px" width="16" height="17" viewBox="0 0 16 17" shape-rendering="crispEdges"><path d="M0.500 0v17" stroke="#e0e0e0"/><rect x="3.500" y="2.500" width="6" height="4" fill="none" stroke="#e0e0e0" stroke-dasharray="1 1"/><rect x="3.500" y="8.500" width="10" height="6" fill="none" stroke="#e0e0e0" stroke-dasharray="2 1"/></svg>
<svg style="left:257px;top:575px" width="7" height="4" viewBox="0 0 7 4" ><path d="M0 0.500h6L3 3.500z" fill="#e0e0e0"/></svg>
<div style="left:128px;top:590px;width:197px;height:1px;background:#3c3c3c;"></div>
<div style="left:128px;top:591px;width:197px;height:1px;background:#565656;"></div>
<span class="t" style="left:128px;top:599px;font-size:9.2px;color:#ececec;-webkit-text-stroke:0.12px;">Abstand verteilen:</span>
<svg style="left:134px;top:613px" width="15" height="15" viewBox="0 0 15 15" shape-rendering="crispEdges"><path d="M0 6.500h4M0 9.500h4" stroke="#e0e0e0"/><rect x="6" y="1" width="5" height="5" fill="#cdcdcd"/><rect x="5.500" y="9.500" width="8" height="4" fill="none" stroke="#e0e0e0"/></svg>
<svg style="left:166px;top:612px" width="14" height="16" viewBox="0 0 14 16" shape-rendering="crispEdges"><path d="M5.500 0v4M8.500 0v4" stroke="#e0e0e0"/><rect x="0.500" y="7.500" width="4" height="8" fill="none" stroke="#e0e0e0"/><rect x="8" y="7" width="5" height="5" fill="#cdcdcd"/></svg>
<div style="left:130px;top:634px;width:13px;height:13px;background:#575757;border:1px solid #363636;box-shadow:inset 0 1px 0 #666;"></div>
<svg style="left:130px;top:631px" width="15" height="15" viewBox="0 0 15 15" ><path d="M2.500 8l3 4L13 1.500" fill="none" stroke="#f0f0f0" stroke-width="1.700"/></svg>
<span class="t" style="left:146px;top:637px;font-size:9.2px;color:#ececec;-webkit-text-stroke:0.12px;">Abstand verwenden</span>
<div style="left:240px;top:634px;width:13px;height:14px;background:#5b5b5b;border:1px solid #353535;"></div>
<div style="left:241px;top:641px;width:11px;height:1px;background:#3a3a3a;"></div>
<svg style="left:240px;top:634px" width="13" height="14" viewBox="0 0 13 14" ><path d="M3.5 5.5h6L6.5 2z" fill="#eaeaea"/><path d="M3.5 8.5h6L6.5 12z" fill="#eaeaea"/></svg>
<div style="left:256px;top:635px;width:47px;height:13px;background:#aaaaaa;border:1px solid #383838;box-shadow:inset 0 1px 0 rgba(0,0,0,.18);"></div>
<span class="t" style="left:259px;top:638px;font-size:9.2px;color:#1c1c1c;-webkit-text-stroke:0.12px;text-shadow:none;">15 mm</span>
<div style="left:123px;top:653px;width:207px;height:3px;background:#262626;"></div>
<div style="left:123px;top:656px;width:207px;height:17px;background:#303030;border-bottom:1px solid #2a2a2a;"></div>
<div style="left:123px;top:656px;width:92px;height:17px;background:#4a4a4a;border-top:1px solid #5c5c5c;"></div>
<div style="left:215px;top:656px;width:1px;height:17px;background:#262626;"></div>
<svg style="left:127px;top:659px" width="7" height="11" viewBox="0 0 7 11" ><path d="M1 4.200L3.500 1.500l2.500 2.700M1 6.800l2.500 2.700 2.500-2.700" fill="none" stroke="#e0e0e0" stroke-width="1.200"/></svg>
<span class="t" style="left:136px;top:659px;font-size:11px;color:#f0f0f0;font-weight:bold;">Informationen</span>
<svg style="left:312px;top:661px" width="15" height="8" viewBox="0 0 15 8" shape-rendering="crispEdges"><path d="M0 2h5L2.500 5z" fill="#d6d6d6" shape-rendering="auto"/><path d="M6 1h8M6 3h8M6 5h8M6 7h8" stroke="#d6d6d6" stroke-width="1" transform="translate(0,-0.5)"/></svg>
<div style="left:123px;top:673px;width:207px;height:123px;background:#4a4a4a;"></div>
<span class="t" style="left:146px;top:680px;font-size:9.2px;color:#ececec;-webkit-text-stroke:0.12px;">X: 283 mm</span>
<span class="t" style="left:146px;top:692px;font-size:9.2px;color:#ececec;-webkit-text-stroke:0.12px;">Y: 176 mm</span>
<span class="t" style="left:146px;top:704px;font-size:9.2px;color:#ececec;-webkit-text-stroke:0.12px;">D:</span>
<svg style="left:128px;top:687px" width="11" height="11" viewBox="0 0 11 11" shape-rendering="crispEdges"><path d="M4.500 0v9M0 4.500h9" stroke="#e4e4e4" stroke-width="1"/><path d="M8 7v4l2.500-2z" fill="#e4e4e4"/></svg>
<div style="left:225px;top:675px;width:1px;height:38px;background:#626262;"></div>
<div style="left:225px;top:716px;width:1px;height:26px;background:#626262;"></div>
<svg style="left:231px;top:687px" width="11" height="11" viewBox="0 0 11 11" shape-rendering="crispEdges"><path d="M1.500 9v-7.500h7" fill="none" stroke="#e4e4e4"/><path d="M9.500 3v6.500h-7" fill="none" stroke="#e4e4e4" stroke-dasharray="1 1"/><path d="M7 0h3v3zM0 8h3l-3 3z" fill="#e4e4e4"/></svg>
<span class="t" style="left:249px;top:680px;font-size:9.2px;color:#ececec;-webkit-text-stroke:0.12px;">B:</span>
<span class="t" style="left:249px;top:692px;font-size:9.2px;color:#ececec;-webkit-text-stroke:0.12px;">H:</span>
<svg style="left:246px;top:701px" width="11" height="9" viewBox="0 0 11 9" ><path d="M0.500 8.500h10M1 8.500L8 1" stroke="#e0e0e0" stroke-width="1" fill="none"/><path d="M3 8l4.500-4.500c1 1 1.500 2.500 1.500 4.500z" fill="#9a9a9a" stroke="#e0e0e0" stroke-width="0.700"/></svg>
<div style="left:124px;top:714px;width:203px;height:1px;background:#3c3c3c;"></div>
<div style="left:124px;top:715px;width:203px;height:1px;background:#5a5a5a;"></div>
<div style="left:124px;top:742px;width:203px;height:1px;background:#3c3c3c;"></div>
<div style="left:124px;top:743px;width:203px;height:1px;background:#5a5a5a;"></div>
<span class="t" style="left:125px;top:751px;font-size:9.2px;color:#ececec;-webkit-text-stroke:0.12px;width:101px;text-align:right;">Position:</span>
<span class="t" style="left:125px;top:763px;font-size:9.2px;color:#ececec;-webkit-text-stroke:0.12px;width:101px;text-align:right;">Letzte Änderung:</span>
<span class="t" style="left:125px;top:775px;font-size:9.2px;color:#ececec;-webkit-text-stroke:0.12px;width:101px;text-align:right;">Autor:</span>
<span class="t" style="left:125px;top:787px;font-size:9.2px;color:#ececec;-webkit-text-stroke:0.12px;width:101px;text-align:right;">Dateigröße:</span>
<div style="left:122px;top:796px;width:209px;height:1px;background:#262626;"></div>
</body></html>
